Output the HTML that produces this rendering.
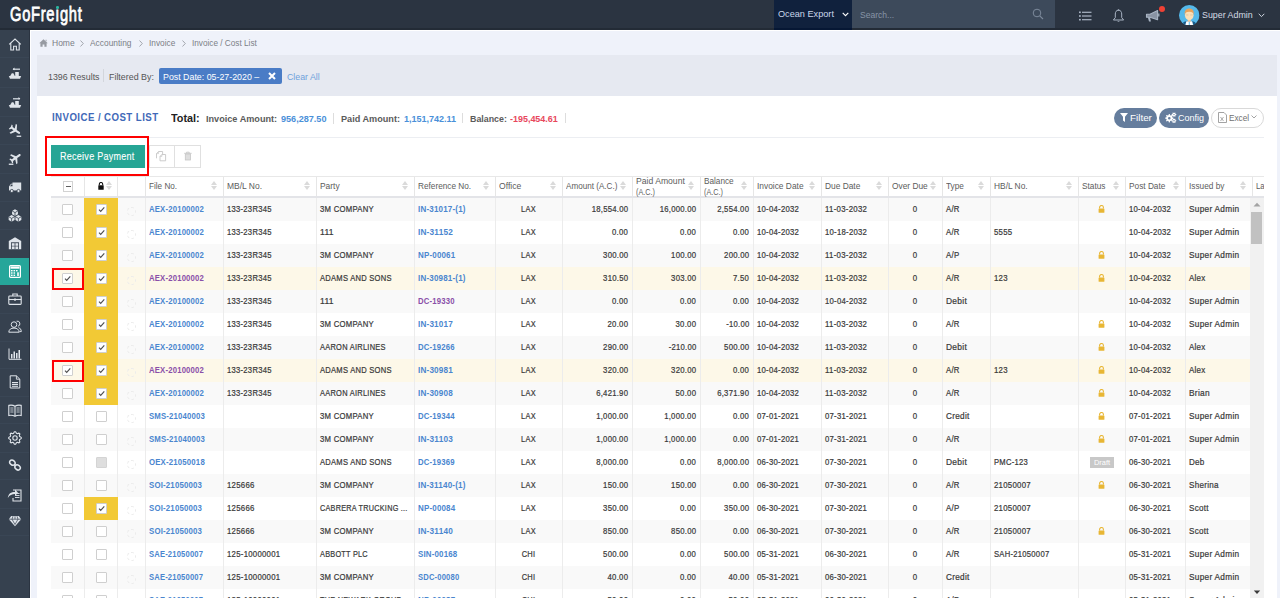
<!DOCTYPE html><html><head><meta charset="utf-8"><title>Invoice / Cost List</title><style>
*{box-sizing:border-box;margin:0;padding:0}
html,body{width:1280px;height:598px;overflow:hidden;background:#eff2fa;font-family:"Liberation Sans",sans-serif;position:relative}
.abs{position:absolute}
.t{position:absolute;white-space:nowrap}
#top{position:absolute;left:0;top:0;width:1280px;height:30px;background:#2b3441;border-bottom:2px solid #232b36}
#logo{position:absolute;left:9.5px;top:0.5px;color:#fff;font-size:21px;line-height:26px;font-weight:normal;-webkit-text-stroke:0.8px #fff;letter-spacing:1px;transform:scaleX(0.70);transform-origin:top left;white-space:nowrap}
#side{position:absolute;left:0;top:30px;width:30px;height:568px;background:#36414f;border-right:1px solid #2b3441}
.si{position:absolute;left:0;width:29px;border-bottom:1px solid #3a4655}
#content{position:absolute;left:30px;top:30px;width:1250px;height:568px;background:#eff2fa;border-left:1px solid #fff;border-top:1px solid #fff}
.cb{position:absolute;width:11px;height:11px;border:1px solid #cfcfcf;background:#fff;border-radius:1px}
.cb.dis{background:#dedede;border-color:#d4d4d4}
.srt{position:absolute;width:6px;height:10px}
.srt:before{content:"";position:absolute;left:0;top:0;border-left:3px solid transparent;border-right:3px solid transparent;border-bottom:4.3px solid #dadada}
.srt:after{content:"";position:absolute;left:0;top:5.2px;border-left:3px solid transparent;border-right:3px solid transparent;border-top:4.3px solid #dadada}
.pill{position:absolute;top:108px;height:20px;border-radius:10px;background:#657d9d}
</style></head><body>
<div id="top"></div>
<div id="logo">GoFre&#305;ght</div>
<div class="abs" style="left:56px;top:6px;width:2.6px;height:2.6px;border-radius:1.3px;background:#2bb5a0"></div>
<div class="abs" style="left:774px;top:0;width:78px;height:28px;background:#10213d"></div><div class="abs" style="left:774px;top:28px;width:78px;height:2px;background:#061734"></div>
<div class="t" style="left:778px;top:8px;font-size:9.6px;line-height:12px;color:#c9d6ea;transform:scaleX(0.9536);transform-origin:left center;">Ocean Export</div>
<svg class="abs" style="left:842px;top:12px" width="7" height="5" viewBox="0 0 7 5"><path d="M0.7 0.8L3.5 3.6L6.3 0.8" fill="none" stroke="#fff" stroke-width="1.1"/></svg>
<div class="abs" style="left:852px;top:0;width:203px;height:28px;background:#3d4a5b"></div>
<div class="t" style="left:860px;top:9px;font-size:9.4px;line-height:12px;color:#8794a6;transform:scaleX(0.9117);transform-origin:left center;">Search...</div>
<svg class="abs" style="left:1032px;top:8px" width="12" height="12" viewBox="0 0 12 12"><circle cx="5" cy="5" r="3.8" fill="none" stroke="#7d8a9c" stroke-width="1"/><path d="M7.8 7.8L11 11" stroke="#7d8a9c" stroke-width="1.1"/></svg>
<svg class="abs" style="left:1079px;top:11px" width="13" height="10" viewBox="0 0 13 10"><g fill="#a9b4c4"><rect x="0" y="0.5" width="1.8" height="1.6"/><rect x="0" y="4.2" width="1.8" height="1.6"/><rect x="0" y="7.9" width="1.8" height="1.6"/><rect x="3" y="0.7" width="9.5" height="1.2"/><rect x="3" y="4.4" width="9.5" height="1.2"/><rect x="3" y="8.1" width="9.5" height="1.2"/></g></svg>
<svg class="abs" style="left:1112px;top:9px" width="13" height="14" viewBox="0 0 13 14"><path d="M6.5 1.2C4.3 1.2 3.3 3 3.3 5V8.6L1.4 11H11.6L9.7 8.6V5C9.7 3 8.7 1.2 6.5 1.2Z" fill="none" stroke="#a9b4c4" stroke-width="1"/><path d="M5.3 12.2A1.3 1.3 0 0 0 7.7 12.2" fill="#a9b4c4"/><circle cx="6.5" cy="1" r="0.8" fill="#a9b4c4"/></svg>
<svg class="abs" style="left:1145px;top:9px" width="16" height="14" viewBox="0 0 16 14"><path d="M1.5 5.2H5L12.6 1.6V10.8L5 8.2H1.5Z" fill="#8993a3" stroke="#a9b4c4" stroke-width="1.1" stroke-linejoin="round"/><path d="M2.8 8.2L4 12.6H5.9L5 8.2Z" fill="#a9b4c4"/><path d="M13.8 4.6V7.4" stroke="#a9b4c4" stroke-width="1.3"/></svg>
<div class="abs" style="left:1159px;top:6px;width:6px;height:6px;border-radius:3px;background:#f04134"></div>
<svg class="abs" style="left:1179px;top:4.5px" width="20.5" height="20.5" viewBox="0 0 21 21"><defs><clipPath id="av"><circle cx="10.5" cy="10.5" r="10.5"/></clipPath></defs><g clip-path="url(#av)"><rect width="21" height="21" fill="#55b9ea"/><path d="M2.5 21C3.5 17.3 6 16.3 10.5 16.3S17.5 17.3 18.5 21Z" fill="#175a8a"/><path d="M6.3 21L7.6 16.6H13.4L14.7 21Z" fill="#fff"/><rect x="10" y="16.8" width="1" height="4.2" fill="#55b9ea"/><rect x="9" y="14" width="3" height="3" fill="#f2c99a"/><ellipse cx="10.5" cy="10.6" rx="4.4" ry="5.1" fill="#fbdfb6"/><path d="M5.8 10.2C5.4 5.6 7.4 3.6 10.5 3.6S15.6 5.6 15.2 10.2C14.9 7.9 13.4 6.8 10.5 6.8S6.1 7.9 5.8 10.2Z" fill="#e9a35c"/><path d="M7 10.2H9.6M11.4 10.2H14" stroke="#d8b28a" stroke-width="0.6"/></g></svg>
<div class="t" style="left:1202px;top:8.5px;font-size:9.6px;line-height:12px;color:#d5dbe4;transform:scaleX(0.9219);transform-origin:left center;">Super Admin</div>
<svg class="abs" style="left:1258px;top:13px" width="7" height="5" viewBox="0 0 7 5"><path d="M0.7 0.8L3.5 3.6L6.3 0.8" fill="none" stroke="#cfd6e0" stroke-width="1"/></svg>
<div id="side"></div>
<div class="si" style="top:30px;height:28px"></div>
<div class="si" style="top:57px;height:31px"></div>
<div class="si" style="top:87px;height:30px"></div>
<div class="si" style="top:116px;height:29px"></div>
<div class="si" style="top:144px;height:30px"></div>
<div class="si" style="top:173px;height:29px"></div>
<div class="si" style="top:201px;height:29px"></div>
<div class="si" style="top:229px;height:30px"></div>
<div class="si" style="top:258px;height:27px;background:#26a69a;border-bottom:0"></div>
<div class="si" style="top:285px;height:29px"></div>
<div class="si" style="top:313px;height:29px"></div>
<div class="si" style="top:341px;height:28px"></div>
<div class="si" style="top:368px;height:29px"></div>
<div class="si" style="top:396px;height:28px"></div>
<div class="si" style="top:423px;height:30px"></div>
<div class="si" style="top:452px;height:28px"></div>
<div class="si" style="top:479px;height:30px"></div>
<div class="si" style="top:508px;height:28px"></div>
<div class="abs" style="left:8px;top:38px;width:14px;height:13px;line-height:0"><svg width="14" height="13" viewBox="0 0 14 13"><path d="M1.2 6.3L7 1L12.8 6.3M2.8 5V12H5.6V8.2H8.4V12H11.2V5" fill="none" stroke="#dfe4ea" stroke-width="1.1"/></svg></div>
<div class="abs" style="left:8px;top:66px;width:14px;height:14px;line-height:0"><svg width="14" height="14" viewBox="0 0 14 14"><path d="M0.8 10H13.2L12 12.8H2Z" fill="#dfe4ea"/><path d="M2.2 10L3.8 7.2H5.4L6.8 10Z" fill="#dfe4ea"/><rect x="7.2" y="6" width="3.6" height="4" fill="#dfe4ea"/><path d="M5 3.2H12" stroke="#dfe4ea" stroke-width="1.2"/><path d="M6.5 1.5L4.6 3.2L6.5 4.3" fill="#dfe4ea"/></svg></div>
<div class="abs" style="left:8px;top:95px;width:14px;height:14px;line-height:0"><svg width="14" height="14" viewBox="0 0 14 14"><path d="M0.8 10H13.2L12 12.8H2Z" fill="#dfe4ea"/><path d="M2.2 10L3.8 7.2H5.4L6.8 10Z" fill="#dfe4ea"/><rect x="7.2" y="6" width="3.6" height="4" fill="#dfe4ea"/><path d="M5 3.8H12" stroke="#dfe4ea" stroke-width="1.2"/><path d="M10.5 2L12.4 3.8L10.5 4.6" fill="#dfe4ea"/></svg></div>
<div class="abs" style="left:8px;top:124px;width:14px;height:14px;line-height:0"><svg width="14" height="14" viewBox="0 0 14 14"><path transform="translate(7 6) rotate(35) scale(0.98) translate(-7 -7)" d="M13.2 7C13.2 7.8 12.4 8.1 11.6 8.1H8.4L5.6 12.6H4.1L5.9 8.1H3.3L2.2 9.6H1.1L1.7 7L1.1 4.4H2.2L3.3 5.9H5.9L4.1 1.4H5.6L8.4 5.9H11.6C12.4 5.9 13.2 6.2 13.2 7Z" fill="#dfe4ea"/><rect x="8.6" y="11.6" width="4.6" height="1.3" fill="#dfe4ea"/></svg></div>
<div class="abs" style="left:8px;top:152px;width:14px;height:14px;line-height:0"><svg width="14" height="14" viewBox="0 0 14 14"><path transform="translate(7.5 6) rotate(-35) scale(0.98) translate(-7 -7)" d="M13.2 7C13.2 7.8 12.4 8.1 11.6 8.1H8.4L5.6 12.6H4.1L5.9 8.1H3.3L2.2 9.6H1.1L1.7 7L1.1 4.4H2.2L3.3 5.9H5.9L4.1 1.4H5.6L8.4 5.9H11.6C12.4 5.9 13.2 6.2 13.2 7Z" fill="#dfe4ea"/><rect x="0.8" y="11.6" width="4.6" height="1.3" fill="#dfe4ea"/></svg></div>
<div class="abs" style="left:8px;top:181px;width:14px;height:13px;line-height:0"><svg width="14" height="13" viewBox="0 0 14 13"><path d="M4.5 1.5H13.2V9.5H1V5.5L3 2.8H4.5Z" fill="#dfe4ea"/><path d="M2 5.3L3.4 3.5H4.5V5.3Z" fill="#36414f"/><circle cx="3.8" cy="10" r="1.6" fill="#dfe4ea" stroke="#36414f" stroke-width="0.8"/><circle cx="10.5" cy="10" r="1.6" fill="#dfe4ea" stroke="#36414f" stroke-width="0.8"/></svg></div>
<div class="abs" style="left:8px;top:209px;width:14px;height:13px;line-height:0"><svg width="14" height="13" viewBox="0 0 14 13" overflow="visible"><path d="M7.00 0.20L4.06 1.90L4.06 5.30L7.00 7.00L9.94 5.30L9.94 1.90Z" fill="#dfe4ea"/><path d="M4.06 1.90L7.00 3.60L9.94 1.90M7.00 3.60L7.00 7.00" fill="none" stroke="#36414f" stroke-width="0.8"/><path d="M3.60 6.00L0.66 7.70L0.66 11.10L3.60 12.80L6.54 11.10L6.54 7.70Z" fill="#dfe4ea"/><path d="M0.66 7.70L3.60 9.40L6.54 7.70M3.60 9.40L3.60 12.80" fill="none" stroke="#36414f" stroke-width="0.8"/><path d="M10.40 6.00L7.46 7.70L7.46 11.10L10.40 12.80L13.34 11.10L13.34 7.70Z" fill="#dfe4ea"/><path d="M7.46 7.70L10.40 9.40L13.34 7.70M10.40 9.40L10.40 12.80" fill="none" stroke="#36414f" stroke-width="0.8"/></svg></div>
<div class="abs" style="left:8px;top:236px;width:14px;height:14px;line-height:0"><svg width="14" height="14" viewBox="0 0 14 14"><path d="M0.8 5L7 1.2L13.2 5V13.2H0.8Z" fill="#dfe4ea"/><rect x="3" y="6.3" width="8" height="6.9" fill="#36414f"/><g fill="#dfe4ea"><rect x="3.8" y="7.2" width="2.8" height="2.6"/><rect x="7.4" y="7.2" width="2.8" height="2.6"/><rect x="3.8" y="10.4" width="2.8" height="2.6"/><rect x="7.4" y="10.4" width="2.8" height="2.6"/></g></svg></div>
<div class="abs" style="left:9px;top:265px;width:12px;height:13px;line-height:0"><svg width="12" height="13" viewBox="0 0 12 13"><rect x="0.6" y="0.6" width="10.8" height="11.8" rx="1" fill="none" stroke="#fff" stroke-width="1.2"/><rect x="1.5" y="1.5" width="9" height="2.2" fill="#fff"/><g fill="#fff"><rect x="2" y="5" width="1.6" height="1.4"/><rect x="4.5" y="5" width="1.6" height="1.4"/><rect x="7" y="5" width="1.6" height="1.4"/><rect x="2" y="7.3" width="1.6" height="1.4"/><rect x="4.5" y="7.3" width="1.6" height="1.4"/><rect x="2" y="9.6" width="1.6" height="1.4"/><rect x="4.5" y="9.6" width="1.6" height="1.4"/><rect x="8.2" y="7.3" width="1.6" height="3.7"/></g></svg></div>
<div class="abs" style="left:8px;top:293px;width:14px;height:12px;line-height:0"><svg width="14" height="12" viewBox="0 0 14 12"><rect x="0.8" y="3" width="12.4" height="8.4" rx="0.8" fill="none" stroke="#dfe4ea" stroke-width="1.1"/><path d="M4.8 3V1H9.2V3" fill="none" stroke="#dfe4ea" stroke-width="1.1"/><path d="M0.8 6.5H13.2" stroke="#dfe4ea" stroke-width="1.1"/><rect x="6" y="5.6" width="2" height="2" fill="#dfe4ea"/></svg></div>
<div class="abs" style="left:8px;top:320px;width:14px;height:14px;line-height:0"><svg width="14" height="13" viewBox="0 0 14 13"><path d="M8.6 1.2A2.6 2.6 0 1 1 9.9 6.3M10.6 7.6C12.2 8.2 13.2 9.4 13.3 11.6H11.6" fill="none" stroke="#dfe4ea" stroke-width="1"/><circle cx="6" cy="4.6" r="2.8" fill="#36414f" stroke="#dfe4ea" stroke-width="1"/><path d="M0.8 12.2C1 9.3 3 8.1 6 8.1S11 9.3 11.2 12.2Z" fill="#36414f" stroke="#dfe4ea" stroke-width="1"/></svg></div>
<div class="abs" style="left:8px;top:348px;width:14px;height:12px;line-height:0"><svg width="14" height="12" viewBox="0 0 14 12"><path d="M1 0.5V11.3H13.5" fill="none" stroke="#dfe4ea" stroke-width="1"/><g fill="#dfe4ea"><rect x="3" y="6" width="1.5" height="4.5"/><rect x="5.5" y="3.5" width="1.5" height="7"/><rect x="8" y="5" width="1.5" height="5.5"/><rect x="10.5" y="2" width="1.5" height="8.5"/></g></svg></div>
<div class="abs" style="left:9px;top:375px;width:12px;height:14px;line-height:0"><svg width="12" height="14" viewBox="0 0 12 14"><path d="M1.2 0.8H7.4L10.8 4.2V13H1.2Z" fill="none" stroke="#dfe4ea" stroke-width="1"/><path d="M7.4 0.8V4.2H10.8" fill="none" stroke="#dfe4ea" stroke-width="0.9"/><g fill="#dfe4ea"><rect x="3" y="7" width="6" height="1.2"/><rect x="3" y="9" width="6" height="1.2"/><rect x="3" y="11" width="6" height="0.8"/></g></svg></div>
<div class="abs" style="left:8px;top:404px;width:14px;height:13px;line-height:0"><svg width="14" height="13" viewBox="0 0 14 13"><path d="M7 2.2C5 1 3 0.9 0.8 1.4V11.5C3 11 5 11.2 7 12.3C9 11.2 11 11 13.2 11.5V1.4C11 0.9 9 1 7 2.2ZM7 2.2V12.3" fill="none" stroke="#dfe4ea" stroke-width="1.1"/><g stroke="#dfe4ea" stroke-width="0.8"><path d="M2.3 4H5.5M2.3 6H5.5M2.3 8H5.5M8.5 4H11.7M8.5 6H11.7M8.5 8H11.7"/></g></svg></div>
<div class="abs" style="left:8px;top:431px;width:14px;height:14px;line-height:0"><svg width="14" height="14" viewBox="0 0 14 14"><path d="M13.27 6.38L13.27 7.62L11.69 8.42L11.32 9.31L11.87 11.00L11.00 11.87L9.31 11.32L8.42 11.69L7.62 13.27L6.38 13.27L5.58 11.69L4.69 11.32L3.00 11.87L2.13 11.00L2.68 9.31L2.31 8.42L0.73 7.62L0.73 6.38L2.31 5.58L2.68 4.69L2.13 3.00L3.00 2.13L4.69 2.68L5.58 2.31L6.38 0.73L7.62 0.73L8.42 2.31L9.31 2.68L11.00 2.13L11.87 3.00L11.32 4.69L11.69 5.58Z" fill="none" stroke="#dfe4ea" stroke-width="1.1" stroke-linejoin="round"/><circle cx="7" cy="7" r="2.2" fill="none" stroke="#dfe4ea" stroke-width="1.1"/></svg></div>
<div class="abs" style="left:8px;top:458px;width:14px;height:14px;line-height:0"><svg width="14" height="14" viewBox="0 0 14 14"><g fill="none" stroke="#dfe4ea" stroke-width="1.5"><ellipse cx="4.4" cy="4.6" rx="2.9" ry="2.3" transform="rotate(40 4.4 4.6)"/><ellipse cx="9.6" cy="9.4" rx="2.9" ry="2.3" transform="rotate(40 9.6 9.4)"/><path d="M6 6.3L8 7.8"/></g></svg></div>
<div class="abs" style="left:7px;top:487px;width:16px;height:15px;line-height:0"><svg width="16" height="15" viewBox="0 0 16 15"><path d="M6 3H14V14H6V11" fill="none" stroke="#dfe4ea" stroke-width="1.1"/><g fill="#dfe4ea"><rect x="8" y="6" width="4.5" height="0.9"/><rect x="8" y="8" width="4.5" height="0.9"/><rect x="8" y="10" width="4.5" height="0.9"/></g><path d="M0.8 11C1.5 6.5 4 5 8 5V2.5L11 5.8L8 9V7C5 7 2.5 8 0.8 11Z" fill="#dfe4ea"/></svg></div>
<div class="abs" style="left:8px;top:515px;width:14px;height:12px;line-height:0"><svg width="14" height="12" viewBox="0 0 14 12"><path d="M3.2 1H10.8L13.2 4.2L7 11.2L0.8 4.2Z" fill="#dfe4ea"/><path d="M4 4.2L7 9.5L10 4.2M0.8 4.2H13.2M5 1.2L4 4.2M9 1.2L10 4.2M7 1.2V4.2" fill="none" stroke="#36414f" stroke-width="0.7"/></svg></div>
<div id="content"></div>
<svg class="abs" style="left:39px;top:39px" width="9" height="8" viewBox="0 0 9 8"><path d="M4.5 0.3L0.2 4.2H1.4V7.8H3.6V5.4H5.4V7.8H7.6V4.2H8.8ZM6.6 0.8H7.5V2.6L6.6 1.8Z" fill="#979ba2"/></svg>
<div class="t" style="left:52px;top:38px;font-size:8.8px;line-height:11px;color:#7b7f86;transform:scaleX(0.9655);transform-origin:left center;">Home</div>
<div class="t" style="left:90px;top:38px;font-size:8.8px;line-height:11px;color:#7b7f86;transform:scaleX(0.9525);transform-origin:left center;">Accounting</div>
<div class="t" style="left:148.5px;top:38px;font-size:8.8px;line-height:11px;color:#7b7f86;transform:scaleX(0.9433);transform-origin:left center;">Invoice</div>
<div class="t" style="left:191.5px;top:38px;font-size:8.8px;line-height:11px;color:#7b7f86;transform:scaleX(0.9332);transform-origin:left center;">Invoice / Cost List</div>
<svg class="abs" style="left:80px;top:39.5px" width="4" height="7" viewBox="0 0 4 7"><path d="M0.5 0.5L3.3 3.5L0.5 6.5" fill="none" stroke="#9a9ea5" stroke-width="0.9"/></svg>
<svg class="abs" style="left:138.5px;top:39.5px" width="4" height="7" viewBox="0 0 4 7"><path d="M0.5 0.5L3.3 3.5L0.5 6.5" fill="none" stroke="#9a9ea5" stroke-width="0.9"/></svg>
<svg class="abs" style="left:181.5px;top:39.5px" width="4" height="7" viewBox="0 0 4 7"><path d="M0.5 0.5L3.3 3.5L0.5 6.5" fill="none" stroke="#9a9ea5" stroke-width="0.9"/></svg>
<div class="abs" style="left:37px;top:55px;width:1240px;height:41px;background:#e6e9f1"></div>
<div class="t" style="left:47.5px;top:71px;font-size:9.3px;line-height:12px;color:#555;transform:scaleX(0.9488);transform-origin:left center;">1396 Results</div>
<div class="abs" style="left:103px;top:69px;width:1px;height:13px;background:#d3d6dc"></div>
<div class="t" style="left:109px;top:71px;font-size:9.3px;line-height:12px;color:#555;transform:scaleX(0.9541);transform-origin:left center;">Filtered By:</div>
<div class="abs" style="left:159px;top:67.5px;width:123px;height:16.5px;background:#4a7cc6;border-radius:2px"></div>
<div class="t" style="left:163px;top:71px;font-size:9.3px;line-height:12px;color:#fff;transform:scaleX(0.9497);transform-origin:left center;">Post Date: 05-27-2020 &ndash;</div>
<svg class="abs" style="left:268px;top:72px" width="8" height="8" viewBox="0 0 8 8"><path d="M1 1L7 7M7 1L1 7" stroke="#fff" stroke-width="2"/></svg>
<div class="t" style="left:287px;top:71px;font-size:9.3px;line-height:12px;color:#6ea1dc;transform:scaleX(0.9456);transform-origin:left center;">Clear All</div>
<div class="abs" style="left:37px;top:96px;width:1240px;height:502px;background:#fff"></div>
<div class="t" style="left:51.5px;top:109.5px;font-size:11.4px;line-height:14px;color:#3f69b8;font-weight:bold;transform:scaleX(0.8496);transform-origin:left center;letter-spacing:0.5px;">INVOICE / COST LIST</div>
<div class="t" style="left:171px;top:111px;font-size:10.8px;line-height:14px;color:#222;font-weight:bold;transform:scaleX(1.0027);transform-origin:left center;">Total:</div>
<div class="t" style="left:206px;top:112.5px;font-size:9.3px;line-height:12px;color:#5a5a5a;font-weight:bold;transform:scaleX(0.9812);transform-origin:left center;">Invoice Amount:</div>
<div class="t" style="left:281px;top:112.5px;font-size:9.3px;line-height:12px;color:#4a90d9;font-weight:bold;transform:scaleX(0.9767);transform-origin:left center;">956,287.50</div>
<div class="abs" style="left:333px;top:113px;width:1px;height:11px;background:#ddd"></div>
<div class="t" style="left:340.5px;top:112.5px;font-size:9.3px;line-height:12px;color:#5a5a5a;font-weight:bold;transform:scaleX(0.9822);transform-origin:left center;">Paid Amount:</div>
<div class="t" style="left:403.5px;top:112.5px;font-size:9.3px;line-height:12px;color:#4a90d9;font-weight:bold;transform:scaleX(0.9673);transform-origin:left center;">1,151,742.11</div>
<div class="abs" style="left:462px;top:113px;width:1px;height:10px;background:#ddd"></div>
<div class="t" style="left:470px;top:112.5px;font-size:9.3px;line-height:12px;color:#5a5a5a;font-weight:bold;transform:scaleX(0.9525);transform-origin:left center;">Balance:</div>
<div class="t" style="left:510px;top:112.5px;font-size:9.3px;line-height:12px;color:#e8475c;font-weight:bold;transform:scaleX(0.9626);transform-origin:left center;">-195,454.61</div>
<div class="abs" style="left:565px;top:113px;width:1px;height:10px;background:#ddd"></div>
<div class="pill" style="left:1114px;width:43px"></div>
<svg class="abs" style="left:1120px;top:113px" width="8" height="9" viewBox="0 0 8 9"><path d="M0 0H8L5 3.8V9L3 7.5V3.8Z" fill="#fff"/></svg>
<div class="t" style="left:1130px;top:112px;font-size:9.6px;line-height:12px;color:#fff;transform:scaleX(1.0272);transform-origin:left center;">Filter</div>
<div class="pill" style="left:1159px;width:50px"></div>
<svg class="abs" style="left:1165px;top:111.5px" width="12" height="12" viewBox="0 0 12 12"><path fill-rule="evenodd" d="M8.48 5.79L8.48 6.61L7.17 7.07L6.95 7.61L7.55 8.86L6.96 9.45L5.71 8.85L5.17 9.07L4.71 10.38L3.89 10.38L3.43 9.07L2.89 8.85L1.64 9.45L1.05 8.86L1.65 7.61L1.43 7.07L0.12 6.61L0.12 5.79L1.43 5.33L1.65 4.79L1.05 3.54L1.64 2.95L2.89 3.55L3.43 3.33L3.89 2.02L4.71 2.02L5.17 3.33L5.71 3.55L6.96 2.95L7.55 3.54L6.95 4.79L7.17 5.33ZM3.00 6.20A1.30 1.30 0 1 0 5.60 6.20A1.30 1.30 0 1 0 3.00 6.20ZM11.38 2.29L11.38 2.91L10.57 3.25L10.35 3.63L10.46 4.50L9.92 4.82L9.22 4.29L8.78 4.29L8.08 4.82L7.54 4.50L7.65 3.63L7.43 3.25L6.62 2.91L6.62 2.29L7.43 1.95L7.65 1.57L7.54 0.70L8.08 0.38L8.78 0.91L9.22 0.91L9.92 0.38L10.46 0.70L10.35 1.57L10.57 1.95ZM8.30 2.60A0.70 0.70 0 1 0 9.70 2.60A0.70 0.70 0 1 0 8.30 2.60ZM11.38 8.49L11.38 9.11L10.57 9.45L10.35 9.83L10.46 10.70L9.92 11.02L9.22 10.49L8.78 10.49L8.08 11.02L7.54 10.70L7.65 9.83L7.43 9.45L6.62 9.11L6.62 8.49L7.43 8.15L7.65 7.77L7.54 6.90L8.08 6.58L8.78 7.11L9.22 7.11L9.92 6.58L10.46 6.90L10.35 7.77L10.57 8.15ZM8.30 8.80A0.70 0.70 0 1 0 9.70 8.80A0.70 0.70 0 1 0 8.30 8.80Z" fill="#fff"/></svg>
<div class="t" style="left:1178px;top:112px;font-size:9.6px;line-height:12px;color:#fff;transform:scaleX(0.9372);transform-origin:left center;">Config</div>
<div class="abs" style="left:1211px;top:108px;width:53px;height:20px;border:1px solid #d9d9d9;border-radius:10px;background:#fff"></div>
<svg class="abs" style="left:1218px;top:111.5px" width="9" height="11" viewBox="0 0 9 11"><path d="M0.5 0.5H6L8.5 3V10.5H0.5Z" fill="none" stroke="#999" stroke-width="0.9"/><path d="M2.5 5L5.5 9M5.5 5L2.5 9" stroke="#999" stroke-width="0.8"/></svg>
<div class="t" style="left:1229px;top:112px;font-size:9.4px;line-height:12px;color:#707070;transform:scaleX(0.8793);transform-origin:left center;">Excel</div>
<svg class="abs" style="left:1251px;top:115px" width="6" height="4" viewBox="0 0 6 4"><path d="M0.5 0.5L3 3L5.5 0.5" fill="none" stroke="#999" stroke-width="0.9"/></svg>
<div class="abs" style="left:51px;top:137px;width:1213px;height:1px;background:#eceef2"></div>
<div class="abs" style="left:51px;top:145px;width:94px;height:23px;background:#26a595"></div>
<div class="t" style="left:60px;top:149px;font-size:10.6px;line-height:14px;color:#fff;-webkit-text-stroke:0.1px #fff;transform:scaleX(0.8522);transform-origin:left center;letter-spacing:0.3px;">Receive Payment</div>
<div class="abs" style="left:149px;top:145px;width:52px;height:23px;border:1px solid #e0e0e0;background:#fff"></div>
<div class="abs" style="left:174px;top:145px;width:1px;height:23px;background:#e0e0e0"></div>
<svg class="abs" style="left:155px;top:150px" width="12" height="12" viewBox="0 0 12 12"><path d="M1.5 8.3V3.6L3.6 1.5H7.6V4.2" fill="none" stroke="#c6c6c6" stroke-width="0.9"/><path d="M1.5 3.6H3.6V1.5" fill="none" stroke="#c6c6c6" stroke-width="0.7"/><path d="M5 6.4L6.9 4.5H10.6V10.8H5Z" fill="#fff" stroke="#c6c6c6" stroke-width="0.9"/><path d="M5 6.4H6.9V4.5" fill="none" stroke="#c6c6c6" stroke-width="0.7"/></svg>
<svg class="abs" style="left:183px;top:151px" width="10" height="10" viewBox="0 0 10 10"><path d="M1.2 2.3H8.6M3.6 2.3V1.2H6.2V2.3" fill="none" stroke="#c6c6c6" stroke-width="0.9"/><rect x="2.3" y="3" width="5.2" height="6" fill="#dedede" stroke="#c6c6c6" stroke-width="0.8"/></svg>
<div class="abs" style="left:45px;top:136px;width:104px;height:40px;border:2px solid #fe0000"></div>
<div class="abs" style="left:51px;top:176px;width:1213px;height:1px;background:#e8e8e8"></div>
<div class="abs" style="left:51px;top:196px;width:1213px;height:2px;background:#e3e4e8"></div>
<div class="abs" style="left:84px;top:177px;width:1px;height:19px;background:#e6e6e6"></div>
<div class="abs" style="left:117px;top:177px;width:1px;height:19px;background:#e6e6e6"></div>
<div class="abs" style="left:145px;top:177px;width:1px;height:19px;background:#e6e6e6"></div>
<div class="abs" style="left:223px;top:177px;width:1px;height:19px;background:#e6e6e6"></div>
<div class="abs" style="left:316px;top:177px;width:1px;height:19px;background:#e6e6e6"></div>
<div class="abs" style="left:414px;top:177px;width:1px;height:19px;background:#e6e6e6"></div>
<div class="abs" style="left:495px;top:177px;width:1px;height:19px;background:#e6e6e6"></div>
<div class="abs" style="left:562px;top:177px;width:1px;height:19px;background:#e6e6e6"></div>
<div class="abs" style="left:632px;top:177px;width:1px;height:19px;background:#e6e6e6"></div>
<div class="abs" style="left:700px;top:177px;width:1px;height:19px;background:#e6e6e6"></div>
<div class="abs" style="left:753px;top:177px;width:1px;height:19px;background:#e6e6e6"></div>
<div class="abs" style="left:821px;top:177px;width:1px;height:19px;background:#e6e6e6"></div>
<div class="abs" style="left:888px;top:177px;width:1px;height:19px;background:#e6e6e6"></div>
<div class="abs" style="left:942px;top:177px;width:1px;height:19px;background:#e6e6e6"></div>
<div class="abs" style="left:990px;top:177px;width:1px;height:19px;background:#e6e6e6"></div>
<div class="abs" style="left:1078px;top:177px;width:1px;height:19px;background:#e6e6e6"></div>
<div class="abs" style="left:1125px;top:177px;width:1px;height:19px;background:#e6e6e6"></div>
<div class="abs" style="left:1185px;top:177px;width:1px;height:19px;background:#e6e6e6"></div>
<div class="abs" style="left:1252px;top:177px;width:1px;height:19px;background:#e6e6e6"></div>
<span class="cb" style="left:63px;top:181px;width:10px;height:11px;border-color:#d2d2d2;border-radius:0"><i class="abs" style="left:1.5px;top:4px;width:5px;height:1.3px;background:#5f5f5f"></i></span>
<svg class="abs" style="left:98px;top:182px" width="6" height="8" viewBox="0 0 6 8"><path d="M1.3 3.3V2.2A1.7 1.7 0 0 1 4.7 2.2V3.3" fill="none" stroke="#111" stroke-width="1.1"/><rect x="0.3" y="3.3" width="5.4" height="4.5" rx="0.4" fill="#111"/></svg>
<i class="srt" style="left:105.5px;top:181px"></i>
<div class="t" style="left:148.5px;top:181px;font-size:8.8px;line-height:10px;color:#5c5c5c;transform:scaleX(0.9262);transform-origin:left center;">File No.</div>
<i class="srt" style="left:211px;top:181px"></i>
<div class="t" style="left:226.5px;top:181px;font-size:8.8px;line-height:10px;color:#5c5c5c;transform:scaleX(0.9628);transform-origin:left center;">MB/L No.</div>
<i class="srt" style="left:304px;top:181px"></i>
<div class="t" style="left:319.5px;top:181px;font-size:8.8px;line-height:10px;color:#5c5c5c;transform:scaleX(0.9557);transform-origin:left center;">Party</div>
<i class="srt" style="left:402px;top:181px"></i>
<div class="t" style="left:417.5px;top:181px;font-size:8.8px;line-height:10px;color:#5c5c5c;transform:scaleX(0.9369);transform-origin:left center;">Reference No.</div>
<i class="srt" style="left:483px;top:181px"></i>
<div class="t" style="left:498.5px;top:181px;font-size:8.8px;line-height:10px;color:#5c5c5c;transform:scaleX(0.9752);transform-origin:left center;">Office</div>
<i class="srt" style="left:550px;top:181px"></i>
<div class="t" style="left:565.5px;top:181px;font-size:8.8px;line-height:10px;color:#5c5c5c;transform:scaleX(0.9219);transform-origin:left center;">Amount (A.C.)</div>
<i class="srt" style="left:620px;top:181px"></i>
<div class="t" style="left:635.5px;top:175.5px;font-size:8.8px;line-height:10px;color:#5c5c5c;transform:scaleX(0.9790);transform-origin:left center;">Paid Amount</div>
<div class="t" style="left:635.5px;top:186.5px;font-size:8.8px;line-height:10px;color:#5c5c5c;transform:scaleX(0.8242);transform-origin:left center;">(A.C.)</div>
<i class="srt" style="left:688px;top:181px"></i>
<div class="t" style="left:703.5px;top:175.5px;font-size:8.8px;line-height:10px;color:#5c5c5c;transform:scaleX(0.9332);transform-origin:left center;">Balance</div>
<div class="t" style="left:703.5px;top:186.5px;font-size:8.8px;line-height:10px;color:#5c5c5c;transform:scaleX(0.8242);transform-origin:left center;">(A.C.)</div>
<i class="srt" style="left:741px;top:181px"></i>
<div class="t" style="left:756.5px;top:181px;font-size:8.8px;line-height:10px;color:#5c5c5c;transform:scaleX(0.9516);transform-origin:left center;">Invoice Date</div>
<i class="srt" style="left:809px;top:181px"></i>
<div class="t" style="left:824.5px;top:181px;font-size:8.8px;line-height:10px;color:#5c5c5c;transform:scaleX(0.9505);transform-origin:left center;">Due Date</div>
<i class="srt" style="left:876px;top:181px"></i>
<div class="t" style="left:891.5px;top:181px;font-size:8.8px;line-height:10px;color:#5c5c5c;transform:scaleX(0.9491);transform-origin:left center;">Over Due</div>
<i class="srt" style="left:930px;top:181px"></i>
<div class="t" style="left:945.5px;top:181px;font-size:8.8px;line-height:10px;color:#5c5c5c;transform:scaleX(0.9387);transform-origin:left center;">Type</div>
<i class="srt" style="left:978px;top:181px"></i>
<div class="t" style="left:993.5px;top:181px;font-size:8.8px;line-height:10px;color:#5c5c5c;transform:scaleX(0.9515);transform-origin:left center;">HB/L No.</div>
<i class="srt" style="left:1066px;top:181px"></i>
<div class="t" style="left:1081.5px;top:181px;font-size:8.8px;line-height:10px;color:#5c5c5c;transform:scaleX(0.9422);transform-origin:left center;">Status</div>
<i class="srt" style="left:1113px;top:181px"></i>
<div class="t" style="left:1128.5px;top:181px;font-size:8.8px;line-height:10px;color:#5c5c5c;transform:scaleX(0.9422);transform-origin:left center;">Post Date</div>
<i class="srt" style="left:1173px;top:181px"></i>
<div class="t" style="left:1188.5px;top:181px;font-size:8.8px;line-height:10px;color:#5c5c5c;transform:scaleX(0.9412);transform-origin:left center;">Issued by</div>
<i class="srt" style="left:1240px;top:181px"></i>
<div class="abs" style="left:1253px;top:177px;width:11px;height:19px;overflow:hidden">
<div class="t" style="left:2.5px;top:4px;font-size:8.8px;line-height:10px;color:#5c5c5c;transform:scaleX(0.8897);transform-origin:left center">La</div>
</div>
<div class="abs" style="left:51px;top:198px;width:1213px;height:400px;overflow:hidden">
<div class="abs" style="left:0;top:0px;width:1213px;height:23px;background:#f9f9f9"></div>
<div class="abs" style="left:33px;top:0px;width:34px;height:23px;background:#f2c935"></div>
<div class="abs" style="left:94px;top:0px;width:1px;height:23px;background:#ececec"></div>
<div class="abs" style="left:172px;top:0px;width:1px;height:23px;background:#ececec"></div>
<div class="abs" style="left:265px;top:0px;width:1px;height:23px;background:#ececec"></div>
<div class="abs" style="left:363px;top:0px;width:1px;height:23px;background:#ececec"></div>
<div class="abs" style="left:444px;top:0px;width:1px;height:23px;background:#ececec"></div>
<div class="abs" style="left:511px;top:0px;width:1px;height:23px;background:#ececec"></div>
<div class="abs" style="left:581px;top:0px;width:1px;height:23px;background:#ececec"></div>
<div class="abs" style="left:649px;top:0px;width:1px;height:23px;background:#ececec"></div>
<div class="abs" style="left:702px;top:0px;width:1px;height:23px;background:#ececec"></div>
<div class="abs" style="left:770px;top:0px;width:1px;height:23px;background:#ececec"></div>
<div class="abs" style="left:837px;top:0px;width:1px;height:23px;background:#ececec"></div>
<div class="abs" style="left:891px;top:0px;width:1px;height:23px;background:#ececec"></div>
<div class="abs" style="left:939px;top:0px;width:1px;height:23px;background:#ececec"></div>
<div class="abs" style="left:1027px;top:0px;width:1px;height:23px;background:#ececec"></div>
<div class="abs" style="left:1074px;top:0px;width:1px;height:23px;background:#ececec"></div>
<div class="abs" style="left:1134px;top:0px;width:1px;height:23px;background:#ececec"></div>
<div class="abs" style="left:1201px;top:0px;width:1px;height:23px;background:#ececec"></div>
<span class="cb" style="left:11px;top:6px"></span>
<span class="cb" style="left:45px;top:6px"><svg width="11" height="11" viewBox="0 0 11 11" style="position:absolute;left:-1px;top:-1px"><path d="M3 5.7L4.7 7.4L8.3 3.4" fill="none" stroke="#505050" stroke-width="1.15"/></svg></span>
<span class="abs" style="left:76px;top:9px;width:9px;height:9px;border-radius:50%;border:1px dashed #ebebeb"></span>
<div class="t" style="left:97.5px;top:6px;font-size:8.7px;line-height:11px;color:#4a86cf;font-weight:bold;letter-spacing:0.2px;transform:scaleX(0.8905);transform-origin:left center">AEX-20100002</div>
<div class="t" style="left:175.5px;top:6px;font-size:8.7px;line-height:11px;color:#3a3a3a;-webkit-text-stroke:0.22px #3a3a3a;letter-spacing:0.3px;transform:scaleX(0.8797);transform-origin:left center">133-23R345</div>
<div class="t" style="left:268.5px;top:6px;font-size:8.7px;line-height:11px;color:#3a3a3a;-webkit-text-stroke:0.22px #3a3a3a;letter-spacing:0.3px;transform:scaleX(0.8891);transform-origin:left center">3M COMPANY</div>
<div class="t" style="left:366.5px;top:6px;font-size:8.7px;line-height:11px;color:#4a86cf;font-weight:bold;letter-spacing:0.2px;transform:scaleX(0.9224);transform-origin:left center">IN-31017-(1)</div>
<div class="t" style="left:444px;width:67px;text-align:center;top:6px;font-size:8.7px;line-height:11px;color:#3a3a3a;-webkit-text-stroke:0.22px #3a3a3a;letter-spacing:0.3px;transform:scaleX(0.8524);transform-origin:center center">LAX</div>
<div class="t" style="right:635.5px;top:6px;font-size:8.7px;line-height:11px;color:#3a3a3a;-webkit-text-stroke:0.22px #3a3a3a;letter-spacing:0.3px;transform:scaleX(0.8877);transform-origin:right center">18,554.00</div>
<div class="t" style="right:567.5px;top:6px;font-size:8.7px;line-height:11px;color:#3a3a3a;-webkit-text-stroke:0.22px #3a3a3a;letter-spacing:0.3px;transform:scaleX(0.8877);transform-origin:right center">16,000.00</div>
<div class="t" style="right:514.5px;top:6px;font-size:8.7px;line-height:11px;color:#3a3a3a;-webkit-text-stroke:0.22px #3a3a3a;letter-spacing:0.3px;transform:scaleX(0.8860);transform-origin:right center">2,554.00</div>
<div class="t" style="left:705.5px;top:6px;font-size:8.7px;line-height:11px;color:#3a3a3a;-webkit-text-stroke:0.22px #3a3a3a;letter-spacing:0.3px;transform:scaleX(0.8883);transform-origin:left center">10-04-2032</div>
<div class="t" style="left:773.5px;top:6px;font-size:8.7px;line-height:11px;color:#3a3a3a;-webkit-text-stroke:0.22px #3a3a3a;letter-spacing:0.3px;transform:scaleX(0.9006);transform-origin:left center">11-03-2032</div>
<div class="t" style="left:837px;width:54px;text-align:center;top:6px;font-size:8.7px;line-height:11px;color:#3a3a3a;-webkit-text-stroke:0.22px #3a3a3a;letter-spacing:0.3px;transform:scaleX(0.8997);transform-origin:center center">0</div>
<div class="t" style="left:894.5px;top:6px;font-size:8.7px;line-height:11px;color:#3a3a3a;-webkit-text-stroke:0.22px #3a3a3a;letter-spacing:0.3px;transform:scaleX(0.8890);transform-origin:left center">A/R</div>
<div class="abs" style="left:1047px;top:7px;line-height:0"><svg width="7" height="8" viewBox="0 0 7 8"><path d="M1.6 3.4V2.4A1.9 1.9 0 0 1 5.4 2.4V3.4" fill="none" stroke="#e8b634" stroke-width="1.1"/><rect x="0.6" y="3.4" width="5.8" height="4.4" rx="0.5" fill="#e8b634"/></svg></div>
<div class="t" style="left:1077.5px;top:6px;font-size:8.7px;line-height:11px;color:#3a3a3a;-webkit-text-stroke:0.22px #3a3a3a;letter-spacing:0.3px;transform:scaleX(0.8883);transform-origin:left center">10-04-2032</div>
<div class="t" style="left:1137.5px;top:6px;font-size:8.7px;line-height:11px;color:#3a3a3a;-webkit-text-stroke:0.22px #3a3a3a;letter-spacing:0.3px;transform:scaleX(0.9499);transform-origin:left center">Super Admin</div>
<div class="abs" style="left:0;top:23px;width:1213px;height:23px;background:#ffffff"></div>
<div class="abs" style="left:33px;top:23px;width:34px;height:23px;background:#f2c935"></div>
<div class="abs" style="left:94px;top:23px;width:1px;height:23px;background:#ececec"></div>
<div class="abs" style="left:172px;top:23px;width:1px;height:23px;background:#ececec"></div>
<div class="abs" style="left:265px;top:23px;width:1px;height:23px;background:#ececec"></div>
<div class="abs" style="left:363px;top:23px;width:1px;height:23px;background:#ececec"></div>
<div class="abs" style="left:444px;top:23px;width:1px;height:23px;background:#ececec"></div>
<div class="abs" style="left:511px;top:23px;width:1px;height:23px;background:#ececec"></div>
<div class="abs" style="left:581px;top:23px;width:1px;height:23px;background:#ececec"></div>
<div class="abs" style="left:649px;top:23px;width:1px;height:23px;background:#ececec"></div>
<div class="abs" style="left:702px;top:23px;width:1px;height:23px;background:#ececec"></div>
<div class="abs" style="left:770px;top:23px;width:1px;height:23px;background:#ececec"></div>
<div class="abs" style="left:837px;top:23px;width:1px;height:23px;background:#ececec"></div>
<div class="abs" style="left:891px;top:23px;width:1px;height:23px;background:#ececec"></div>
<div class="abs" style="left:939px;top:23px;width:1px;height:23px;background:#ececec"></div>
<div class="abs" style="left:1027px;top:23px;width:1px;height:23px;background:#ececec"></div>
<div class="abs" style="left:1074px;top:23px;width:1px;height:23px;background:#ececec"></div>
<div class="abs" style="left:1134px;top:23px;width:1px;height:23px;background:#ececec"></div>
<div class="abs" style="left:1201px;top:23px;width:1px;height:23px;background:#ececec"></div>
<span class="cb" style="left:11px;top:29px"></span>
<span class="cb" style="left:45px;top:29px"><svg width="11" height="11" viewBox="0 0 11 11" style="position:absolute;left:-1px;top:-1px"><path d="M3 5.7L4.7 7.4L8.3 3.4" fill="none" stroke="#505050" stroke-width="1.15"/></svg></span>
<span class="abs" style="left:76px;top:32px;width:9px;height:9px;border-radius:50%;border:1px dashed #ebebeb"></span>
<div class="t" style="left:97.5px;top:29px;font-size:8.7px;line-height:11px;color:#4a86cf;font-weight:bold;letter-spacing:0.2px;transform:scaleX(0.8905);transform-origin:left center">AEX-20100002</div>
<div class="t" style="left:175.5px;top:29px;font-size:8.7px;line-height:11px;color:#3a3a3a;-webkit-text-stroke:0.22px #3a3a3a;letter-spacing:0.3px;transform:scaleX(0.8797);transform-origin:left center">133-23R345</div>
<div class="t" style="left:268.5px;top:29px;font-size:8.7px;line-height:11px;color:#3a3a3a;-webkit-text-stroke:0.22px #3a3a3a;letter-spacing:0.3px;transform:scaleX(0.9820);transform-origin:left center">111</div>
<div class="t" style="left:366.5px;top:29px;font-size:8.7px;line-height:11px;color:#4a86cf;font-weight:bold;letter-spacing:0.2px;transform:scaleX(0.9480);transform-origin:left center">IN-31152</div>
<div class="t" style="left:444px;width:67px;text-align:center;top:29px;font-size:8.7px;line-height:11px;color:#3a3a3a;-webkit-text-stroke:0.22px #3a3a3a;letter-spacing:0.3px;transform:scaleX(0.8524);transform-origin:center center">LAX</div>
<div class="t" style="right:635.5px;top:29px;font-size:8.7px;line-height:11px;color:#3a3a3a;-webkit-text-stroke:0.22px #3a3a3a;letter-spacing:0.3px;transform:scaleX(0.8877);transform-origin:right center">0.00</div>
<div class="t" style="right:567.5px;top:29px;font-size:8.7px;line-height:11px;color:#3a3a3a;-webkit-text-stroke:0.22px #3a3a3a;letter-spacing:0.3px;transform:scaleX(0.8877);transform-origin:right center">0.00</div>
<div class="t" style="right:514.5px;top:29px;font-size:8.7px;line-height:11px;color:#3a3a3a;-webkit-text-stroke:0.22px #3a3a3a;letter-spacing:0.3px;transform:scaleX(0.8877);transform-origin:right center">0.00</div>
<div class="t" style="left:705.5px;top:29px;font-size:8.7px;line-height:11px;color:#3a3a3a;-webkit-text-stroke:0.22px #3a3a3a;letter-spacing:0.3px;transform:scaleX(0.8883);transform-origin:left center">10-04-2032</div>
<div class="t" style="left:773.5px;top:29px;font-size:8.7px;line-height:11px;color:#3a3a3a;-webkit-text-stroke:0.22px #3a3a3a;letter-spacing:0.3px;transform:scaleX(0.8883);transform-origin:left center">10-18-2032</div>
<div class="t" style="left:837px;width:54px;text-align:center;top:29px;font-size:8.7px;line-height:11px;color:#3a3a3a;-webkit-text-stroke:0.22px #3a3a3a;letter-spacing:0.3px;transform:scaleX(0.8997);transform-origin:center center">0</div>
<div class="t" style="left:894.5px;top:29px;font-size:8.7px;line-height:11px;color:#3a3a3a;-webkit-text-stroke:0.22px #3a3a3a;letter-spacing:0.3px;transform:scaleX(0.8890);transform-origin:left center">A/R</div>
<div class="t" style="left:942.5px;top:29px;font-size:8.7px;line-height:11px;color:#3a3a3a;-webkit-text-stroke:0.22px #3a3a3a;letter-spacing:0.3px;transform:scaleX(0.8997);transform-origin:left center">5555</div>
<div class="t" style="left:1077.5px;top:29px;font-size:8.7px;line-height:11px;color:#3a3a3a;-webkit-text-stroke:0.22px #3a3a3a;letter-spacing:0.3px;transform:scaleX(0.8883);transform-origin:left center">10-04-2032</div>
<div class="t" style="left:1137.5px;top:29px;font-size:8.7px;line-height:11px;color:#3a3a3a;-webkit-text-stroke:0.22px #3a3a3a;letter-spacing:0.3px;transform:scaleX(0.9499);transform-origin:left center">Super Admin</div>
<div class="abs" style="left:0;top:46px;width:1213px;height:23px;background:#f9f9f9"></div>
<div class="abs" style="left:33px;top:46px;width:34px;height:23px;background:#f2c935"></div>
<div class="abs" style="left:94px;top:46px;width:1px;height:23px;background:#ececec"></div>
<div class="abs" style="left:172px;top:46px;width:1px;height:23px;background:#ececec"></div>
<div class="abs" style="left:265px;top:46px;width:1px;height:23px;background:#ececec"></div>
<div class="abs" style="left:363px;top:46px;width:1px;height:23px;background:#ececec"></div>
<div class="abs" style="left:444px;top:46px;width:1px;height:23px;background:#ececec"></div>
<div class="abs" style="left:511px;top:46px;width:1px;height:23px;background:#ececec"></div>
<div class="abs" style="left:581px;top:46px;width:1px;height:23px;background:#ececec"></div>
<div class="abs" style="left:649px;top:46px;width:1px;height:23px;background:#ececec"></div>
<div class="abs" style="left:702px;top:46px;width:1px;height:23px;background:#ececec"></div>
<div class="abs" style="left:770px;top:46px;width:1px;height:23px;background:#ececec"></div>
<div class="abs" style="left:837px;top:46px;width:1px;height:23px;background:#ececec"></div>
<div class="abs" style="left:891px;top:46px;width:1px;height:23px;background:#ececec"></div>
<div class="abs" style="left:939px;top:46px;width:1px;height:23px;background:#ececec"></div>
<div class="abs" style="left:1027px;top:46px;width:1px;height:23px;background:#ececec"></div>
<div class="abs" style="left:1074px;top:46px;width:1px;height:23px;background:#ececec"></div>
<div class="abs" style="left:1134px;top:46px;width:1px;height:23px;background:#ececec"></div>
<div class="abs" style="left:1201px;top:46px;width:1px;height:23px;background:#ececec"></div>
<span class="cb" style="left:11px;top:52px"></span>
<span class="cb" style="left:45px;top:52px"><svg width="11" height="11" viewBox="0 0 11 11" style="position:absolute;left:-1px;top:-1px"><path d="M3 5.7L4.7 7.4L8.3 3.4" fill="none" stroke="#505050" stroke-width="1.15"/></svg></span>
<span class="abs" style="left:76px;top:55px;width:9px;height:9px;border-radius:50%;border:1px dashed #ebebeb"></span>
<div class="t" style="left:97.5px;top:52px;font-size:8.7px;line-height:11px;color:#4a86cf;font-weight:bold;letter-spacing:0.2px;transform:scaleX(0.8905);transform-origin:left center">AEX-20100002</div>
<div class="t" style="left:175.5px;top:52px;font-size:8.7px;line-height:11px;color:#3a3a3a;-webkit-text-stroke:0.22px #3a3a3a;letter-spacing:0.3px;transform:scaleX(0.8797);transform-origin:left center">133-23R345</div>
<div class="t" style="left:268.5px;top:52px;font-size:8.7px;line-height:11px;color:#3a3a3a;-webkit-text-stroke:0.22px #3a3a3a;letter-spacing:0.3px;transform:scaleX(0.8891);transform-origin:left center">3M COMPANY</div>
<div class="t" style="left:366.5px;top:52px;font-size:8.7px;line-height:11px;color:#4a86cf;font-weight:bold;letter-spacing:0.2px;transform:scaleX(0.9171);transform-origin:left center">NP-00061</div>
<div class="t" style="left:444px;width:67px;text-align:center;top:52px;font-size:8.7px;line-height:11px;color:#3a3a3a;-webkit-text-stroke:0.22px #3a3a3a;letter-spacing:0.3px;transform:scaleX(0.8524);transform-origin:center center">LAX</div>
<div class="t" style="right:635.5px;top:52px;font-size:8.7px;line-height:11px;color:#3a3a3a;-webkit-text-stroke:0.22px #3a3a3a;letter-spacing:0.3px;transform:scaleX(0.8920);transform-origin:right center">300.00</div>
<div class="t" style="right:567.5px;top:52px;font-size:8.7px;line-height:11px;color:#3a3a3a;-webkit-text-stroke:0.22px #3a3a3a;letter-spacing:0.3px;transform:scaleX(0.8920);transform-origin:right center">100.00</div>
<div class="t" style="right:514.5px;top:52px;font-size:8.7px;line-height:11px;color:#3a3a3a;-webkit-text-stroke:0.22px #3a3a3a;letter-spacing:0.3px;transform:scaleX(0.8920);transform-origin:right center">200.00</div>
<div class="t" style="left:705.5px;top:52px;font-size:8.7px;line-height:11px;color:#3a3a3a;-webkit-text-stroke:0.22px #3a3a3a;letter-spacing:0.3px;transform:scaleX(0.8883);transform-origin:left center">10-04-2032</div>
<div class="t" style="left:773.5px;top:52px;font-size:8.7px;line-height:11px;color:#3a3a3a;-webkit-text-stroke:0.22px #3a3a3a;letter-spacing:0.3px;transform:scaleX(0.9006);transform-origin:left center">11-03-2032</div>
<div class="t" style="left:837px;width:54px;text-align:center;top:52px;font-size:8.7px;line-height:11px;color:#3a3a3a;-webkit-text-stroke:0.22px #3a3a3a;letter-spacing:0.3px;transform:scaleX(0.8997);transform-origin:center center">0</div>
<div class="t" style="left:894.5px;top:52px;font-size:8.7px;line-height:11px;color:#3a3a3a;-webkit-text-stroke:0.22px #3a3a3a;letter-spacing:0.3px;transform:scaleX(0.9046);transform-origin:left center">A/P</div>
<div class="abs" style="left:1047px;top:53px;line-height:0"><svg width="7" height="8" viewBox="0 0 7 8"><path d="M1.6 3.4V2.4A1.9 1.9 0 0 1 5.4 2.4V3.4" fill="none" stroke="#e8b634" stroke-width="1.1"/><rect x="0.6" y="3.4" width="5.8" height="4.4" rx="0.5" fill="#e8b634"/></svg></div>
<div class="t" style="left:1077.5px;top:52px;font-size:8.7px;line-height:11px;color:#3a3a3a;-webkit-text-stroke:0.22px #3a3a3a;letter-spacing:0.3px;transform:scaleX(0.8883);transform-origin:left center">10-04-2032</div>
<div class="t" style="left:1137.5px;top:52px;font-size:8.7px;line-height:11px;color:#3a3a3a;-webkit-text-stroke:0.22px #3a3a3a;letter-spacing:0.3px;transform:scaleX(0.9499);transform-origin:left center">Super Admin</div>
<div class="abs" style="left:0;top:69px;width:1213px;height:23px;background:#fdf8e8"></div>
<div class="abs" style="left:33px;top:69px;width:34px;height:23px;background:#f2c935"></div>
<div class="abs" style="left:94px;top:69px;width:1px;height:23px;background:#ececec"></div>
<div class="abs" style="left:172px;top:69px;width:1px;height:23px;background:#ececec"></div>
<div class="abs" style="left:265px;top:69px;width:1px;height:23px;background:#ececec"></div>
<div class="abs" style="left:363px;top:69px;width:1px;height:23px;background:#ececec"></div>
<div class="abs" style="left:444px;top:69px;width:1px;height:23px;background:#ececec"></div>
<div class="abs" style="left:511px;top:69px;width:1px;height:23px;background:#ececec"></div>
<div class="abs" style="left:581px;top:69px;width:1px;height:23px;background:#ececec"></div>
<div class="abs" style="left:649px;top:69px;width:1px;height:23px;background:#ececec"></div>
<div class="abs" style="left:702px;top:69px;width:1px;height:23px;background:#ececec"></div>
<div class="abs" style="left:770px;top:69px;width:1px;height:23px;background:#ececec"></div>
<div class="abs" style="left:837px;top:69px;width:1px;height:23px;background:#ececec"></div>
<div class="abs" style="left:891px;top:69px;width:1px;height:23px;background:#ececec"></div>
<div class="abs" style="left:939px;top:69px;width:1px;height:23px;background:#ececec"></div>
<div class="abs" style="left:1027px;top:69px;width:1px;height:23px;background:#ececec"></div>
<div class="abs" style="left:1074px;top:69px;width:1px;height:23px;background:#ececec"></div>
<div class="abs" style="left:1134px;top:69px;width:1px;height:23px;background:#ececec"></div>
<div class="abs" style="left:1201px;top:69px;width:1px;height:23px;background:#ececec"></div>
<span class="cb" style="left:11px;top:75px"><svg width="11" height="11" viewBox="0 0 11 11" style="position:absolute;left:-1px;top:-1px"><path d="M3 5.7L4.7 7.4L8.3 3.4" fill="none" stroke="#505050" stroke-width="1.15"/></svg></span>
<span class="cb" style="left:45px;top:75px"><svg width="11" height="11" viewBox="0 0 11 11" style="position:absolute;left:-1px;top:-1px"><path d="M3 5.7L4.7 7.4L8.3 3.4" fill="none" stroke="#505050" stroke-width="1.15"/></svg></span>
<span class="abs" style="left:76px;top:78px;width:9px;height:9px;border-radius:50%;border:1px dashed #ebebeb"></span>
<div class="t" style="left:97.5px;top:75px;font-size:8.7px;line-height:11px;color:#8a4fa8;font-weight:bold;letter-spacing:0.2px;transform:scaleX(0.8905);transform-origin:left center">AEX-20100002</div>
<div class="t" style="left:175.5px;top:75px;font-size:8.7px;line-height:11px;color:#3a3a3a;-webkit-text-stroke:0.22px #3a3a3a;letter-spacing:0.3px;transform:scaleX(0.8797);transform-origin:left center">133-23R345</div>
<div class="t" style="left:268.5px;top:75px;font-size:8.7px;line-height:11px;color:#3a3a3a;-webkit-text-stroke:0.22px #3a3a3a;letter-spacing:0.3px;transform:scaleX(0.8713);transform-origin:left center">ADAMS AND SONS</div>
<div class="t" style="left:366.5px;top:75px;font-size:8.7px;line-height:11px;color:#4a86cf;font-weight:bold;letter-spacing:0.2px;transform:scaleX(0.9224);transform-origin:left center">IN-30981-(1)</div>
<div class="t" style="left:444px;width:67px;text-align:center;top:75px;font-size:8.7px;line-height:11px;color:#3a3a3a;-webkit-text-stroke:0.22px #3a3a3a;letter-spacing:0.3px;transform:scaleX(0.8524);transform-origin:center center">LAX</div>
<div class="t" style="right:635.5px;top:75px;font-size:8.7px;line-height:11px;color:#3a3a3a;-webkit-text-stroke:0.22px #3a3a3a;letter-spacing:0.3px;transform:scaleX(0.8920);transform-origin:right center">310.50</div>
<div class="t" style="right:567.5px;top:75px;font-size:8.7px;line-height:11px;color:#3a3a3a;-webkit-text-stroke:0.22px #3a3a3a;letter-spacing:0.3px;transform:scaleX(0.8920);transform-origin:right center">303.00</div>
<div class="t" style="right:514.5px;top:75px;font-size:8.7px;line-height:11px;color:#3a3a3a;-webkit-text-stroke:0.22px #3a3a3a;letter-spacing:0.3px;transform:scaleX(0.8877);transform-origin:right center">7.50</div>
<div class="t" style="left:705.5px;top:75px;font-size:8.7px;line-height:11px;color:#3a3a3a;-webkit-text-stroke:0.22px #3a3a3a;letter-spacing:0.3px;transform:scaleX(0.8883);transform-origin:left center">10-04-2032</div>
<div class="t" style="left:773.5px;top:75px;font-size:8.7px;line-height:11px;color:#3a3a3a;-webkit-text-stroke:0.22px #3a3a3a;letter-spacing:0.3px;transform:scaleX(0.9006);transform-origin:left center">11-03-2032</div>
<div class="t" style="left:837px;width:54px;text-align:center;top:75px;font-size:8.7px;line-height:11px;color:#3a3a3a;-webkit-text-stroke:0.22px #3a3a3a;letter-spacing:0.3px;transform:scaleX(0.8997);transform-origin:center center">0</div>
<div class="t" style="left:894.5px;top:75px;font-size:8.7px;line-height:11px;color:#3a3a3a;-webkit-text-stroke:0.22px #3a3a3a;letter-spacing:0.3px;transform:scaleX(0.8890);transform-origin:left center">A/R</div>
<div class="t" style="left:942.5px;top:75px;font-size:8.7px;line-height:11px;color:#3a3a3a;-webkit-text-stroke:0.22px #3a3a3a;letter-spacing:0.3px;transform:scaleX(0.8997);transform-origin:left center">123</div>
<div class="abs" style="left:1047px;top:76px;line-height:0"><svg width="7" height="8" viewBox="0 0 7 8"><path d="M1.6 3.4V2.4A1.9 1.9 0 0 1 5.4 2.4V3.4" fill="none" stroke="#e8b634" stroke-width="1.1"/><rect x="0.6" y="3.4" width="5.8" height="4.4" rx="0.5" fill="#e8b634"/></svg></div>
<div class="t" style="left:1077.5px;top:75px;font-size:8.7px;line-height:11px;color:#3a3a3a;-webkit-text-stroke:0.22px #3a3a3a;letter-spacing:0.3px;transform:scaleX(0.8883);transform-origin:left center">10-04-2032</div>
<div class="t" style="left:1137.5px;top:75px;font-size:8.7px;line-height:11px;color:#3a3a3a;-webkit-text-stroke:0.22px #3a3a3a;letter-spacing:0.3px;transform:scaleX(0.9148);transform-origin:left center">Alex</div>
<div class="abs" style="left:0;top:92px;width:1213px;height:23px;background:#f9f9f9"></div>
<div class="abs" style="left:33px;top:92px;width:34px;height:23px;background:#f2c935"></div>
<div class="abs" style="left:94px;top:92px;width:1px;height:23px;background:#ececec"></div>
<div class="abs" style="left:172px;top:92px;width:1px;height:23px;background:#ececec"></div>
<div class="abs" style="left:265px;top:92px;width:1px;height:23px;background:#ececec"></div>
<div class="abs" style="left:363px;top:92px;width:1px;height:23px;background:#ececec"></div>
<div class="abs" style="left:444px;top:92px;width:1px;height:23px;background:#ececec"></div>
<div class="abs" style="left:511px;top:92px;width:1px;height:23px;background:#ececec"></div>
<div class="abs" style="left:581px;top:92px;width:1px;height:23px;background:#ececec"></div>
<div class="abs" style="left:649px;top:92px;width:1px;height:23px;background:#ececec"></div>
<div class="abs" style="left:702px;top:92px;width:1px;height:23px;background:#ececec"></div>
<div class="abs" style="left:770px;top:92px;width:1px;height:23px;background:#ececec"></div>
<div class="abs" style="left:837px;top:92px;width:1px;height:23px;background:#ececec"></div>
<div class="abs" style="left:891px;top:92px;width:1px;height:23px;background:#ececec"></div>
<div class="abs" style="left:939px;top:92px;width:1px;height:23px;background:#ececec"></div>
<div class="abs" style="left:1027px;top:92px;width:1px;height:23px;background:#ececec"></div>
<div class="abs" style="left:1074px;top:92px;width:1px;height:23px;background:#ececec"></div>
<div class="abs" style="left:1134px;top:92px;width:1px;height:23px;background:#ececec"></div>
<div class="abs" style="left:1201px;top:92px;width:1px;height:23px;background:#ececec"></div>
<span class="cb" style="left:11px;top:98px"></span>
<span class="cb" style="left:45px;top:98px"><svg width="11" height="11" viewBox="0 0 11 11" style="position:absolute;left:-1px;top:-1px"><path d="M3 5.7L4.7 7.4L8.3 3.4" fill="none" stroke="#505050" stroke-width="1.15"/></svg></span>
<span class="abs" style="left:76px;top:101px;width:9px;height:9px;border-radius:50%;border:1px dashed #ebebeb"></span>
<div class="t" style="left:97.5px;top:98px;font-size:8.7px;line-height:11px;color:#4a86cf;font-weight:bold;letter-spacing:0.2px;transform:scaleX(0.8905);transform-origin:left center">AEX-20100002</div>
<div class="t" style="left:175.5px;top:98px;font-size:8.7px;line-height:11px;color:#3a3a3a;-webkit-text-stroke:0.22px #3a3a3a;letter-spacing:0.3px;transform:scaleX(0.8797);transform-origin:left center">133-23R345</div>
<div class="t" style="left:268.5px;top:98px;font-size:8.7px;line-height:11px;color:#3a3a3a;-webkit-text-stroke:0.22px #3a3a3a;letter-spacing:0.3px;transform:scaleX(0.9820);transform-origin:left center">111</div>
<div class="t" style="left:366.5px;top:98px;font-size:8.7px;line-height:11px;color:#8a4fa8;font-weight:bold;letter-spacing:0.2px;transform:scaleX(0.8939);transform-origin:left center">DC-19330</div>
<div class="t" style="left:444px;width:67px;text-align:center;top:98px;font-size:8.7px;line-height:11px;color:#3a3a3a;-webkit-text-stroke:0.22px #3a3a3a;letter-spacing:0.3px;transform:scaleX(0.8524);transform-origin:center center">LAX</div>
<div class="t" style="right:635.5px;top:98px;font-size:8.7px;line-height:11px;color:#3a3a3a;-webkit-text-stroke:0.22px #3a3a3a;letter-spacing:0.3px;transform:scaleX(0.8877);transform-origin:right center">0.00</div>
<div class="t" style="right:567.5px;top:98px;font-size:8.7px;line-height:11px;color:#3a3a3a;-webkit-text-stroke:0.22px #3a3a3a;letter-spacing:0.3px;transform:scaleX(0.8877);transform-origin:right center">0.00</div>
<div class="t" style="right:514.5px;top:98px;font-size:8.7px;line-height:11px;color:#3a3a3a;-webkit-text-stroke:0.22px #3a3a3a;letter-spacing:0.3px;transform:scaleX(0.8877);transform-origin:right center">0.00</div>
<div class="t" style="left:705.5px;top:98px;font-size:8.7px;line-height:11px;color:#3a3a3a;-webkit-text-stroke:0.22px #3a3a3a;letter-spacing:0.3px;transform:scaleX(0.8883);transform-origin:left center">10-04-2032</div>
<div class="t" style="left:773.5px;top:98px;font-size:8.7px;line-height:11px;color:#3a3a3a;-webkit-text-stroke:0.22px #3a3a3a;letter-spacing:0.3px;transform:scaleX(0.8883);transform-origin:left center">10-04-2032</div>
<div class="t" style="left:837px;width:54px;text-align:center;top:98px;font-size:8.7px;line-height:11px;color:#3a3a3a;-webkit-text-stroke:0.22px #3a3a3a;letter-spacing:0.3px;transform:scaleX(0.8997);transform-origin:center center">0</div>
<div class="t" style="left:894.5px;top:98px;font-size:8.7px;line-height:11px;color:#3a3a3a;-webkit-text-stroke:0.22px #3a3a3a;letter-spacing:0.3px;transform:scaleX(0.9675);transform-origin:left center">Debit</div>
<div class="t" style="left:1077.5px;top:98px;font-size:8.7px;line-height:11px;color:#3a3a3a;-webkit-text-stroke:0.22px #3a3a3a;letter-spacing:0.3px;transform:scaleX(0.8883);transform-origin:left center">10-04-2032</div>
<div class="t" style="left:1137.5px;top:98px;font-size:8.7px;line-height:11px;color:#3a3a3a;-webkit-text-stroke:0.22px #3a3a3a;letter-spacing:0.3px;transform:scaleX(0.9499);transform-origin:left center">Super Admin</div>
<div class="abs" style="left:0;top:115px;width:1213px;height:23px;background:#ffffff"></div>
<div class="abs" style="left:33px;top:115px;width:34px;height:23px;background:#f2c935"></div>
<div class="abs" style="left:94px;top:115px;width:1px;height:23px;background:#ececec"></div>
<div class="abs" style="left:172px;top:115px;width:1px;height:23px;background:#ececec"></div>
<div class="abs" style="left:265px;top:115px;width:1px;height:23px;background:#ececec"></div>
<div class="abs" style="left:363px;top:115px;width:1px;height:23px;background:#ececec"></div>
<div class="abs" style="left:444px;top:115px;width:1px;height:23px;background:#ececec"></div>
<div class="abs" style="left:511px;top:115px;width:1px;height:23px;background:#ececec"></div>
<div class="abs" style="left:581px;top:115px;width:1px;height:23px;background:#ececec"></div>
<div class="abs" style="left:649px;top:115px;width:1px;height:23px;background:#ececec"></div>
<div class="abs" style="left:702px;top:115px;width:1px;height:23px;background:#ececec"></div>
<div class="abs" style="left:770px;top:115px;width:1px;height:23px;background:#ececec"></div>
<div class="abs" style="left:837px;top:115px;width:1px;height:23px;background:#ececec"></div>
<div class="abs" style="left:891px;top:115px;width:1px;height:23px;background:#ececec"></div>
<div class="abs" style="left:939px;top:115px;width:1px;height:23px;background:#ececec"></div>
<div class="abs" style="left:1027px;top:115px;width:1px;height:23px;background:#ececec"></div>
<div class="abs" style="left:1074px;top:115px;width:1px;height:23px;background:#ececec"></div>
<div class="abs" style="left:1134px;top:115px;width:1px;height:23px;background:#ececec"></div>
<div class="abs" style="left:1201px;top:115px;width:1px;height:23px;background:#ececec"></div>
<span class="cb" style="left:11px;top:121px"></span>
<span class="cb" style="left:45px;top:121px"><svg width="11" height="11" viewBox="0 0 11 11" style="position:absolute;left:-1px;top:-1px"><path d="M3 5.7L4.7 7.4L8.3 3.4" fill="none" stroke="#505050" stroke-width="1.15"/></svg></span>
<span class="abs" style="left:76px;top:124px;width:9px;height:9px;border-radius:50%;border:1px dashed #ebebeb"></span>
<div class="t" style="left:97.5px;top:121px;font-size:8.7px;line-height:11px;color:#4a86cf;font-weight:bold;letter-spacing:0.2px;transform:scaleX(0.8905);transform-origin:left center">AEX-20100002</div>
<div class="t" style="left:175.5px;top:121px;font-size:8.7px;line-height:11px;color:#3a3a3a;-webkit-text-stroke:0.22px #3a3a3a;letter-spacing:0.3px;transform:scaleX(0.8797);transform-origin:left center">133-23R345</div>
<div class="t" style="left:268.5px;top:121px;font-size:8.7px;line-height:11px;color:#3a3a3a;-webkit-text-stroke:0.22px #3a3a3a;letter-spacing:0.3px;transform:scaleX(0.8891);transform-origin:left center">3M COMPANY</div>
<div class="t" style="left:366.5px;top:121px;font-size:8.7px;line-height:11px;color:#4a86cf;font-weight:bold;letter-spacing:0.2px;transform:scaleX(0.9358);transform-origin:left center">IN-31017</div>
<div class="t" style="left:444px;width:67px;text-align:center;top:121px;font-size:8.7px;line-height:11px;color:#3a3a3a;-webkit-text-stroke:0.22px #3a3a3a;letter-spacing:0.3px;transform:scaleX(0.8524);transform-origin:center center">LAX</div>
<div class="t" style="right:635.5px;top:121px;font-size:8.7px;line-height:11px;color:#3a3a3a;-webkit-text-stroke:0.22px #3a3a3a;letter-spacing:0.3px;transform:scaleX(0.8904);transform-origin:right center">20.00</div>
<div class="t" style="right:567.5px;top:121px;font-size:8.7px;line-height:11px;color:#3a3a3a;-webkit-text-stroke:0.22px #3a3a3a;letter-spacing:0.3px;transform:scaleX(0.8904);transform-origin:right center">30.00</div>
<div class="t" style="right:514.5px;top:121px;font-size:8.7px;line-height:11px;color:#3a3a3a;-webkit-text-stroke:0.22px #3a3a3a;letter-spacing:0.3px;transform:scaleX(0.8813);transform-origin:right center">-10.00</div>
<div class="t" style="left:705.5px;top:121px;font-size:8.7px;line-height:11px;color:#3a3a3a;-webkit-text-stroke:0.22px #3a3a3a;letter-spacing:0.3px;transform:scaleX(0.8883);transform-origin:left center">10-04-2032</div>
<div class="t" style="left:773.5px;top:121px;font-size:8.7px;line-height:11px;color:#3a3a3a;-webkit-text-stroke:0.22px #3a3a3a;letter-spacing:0.3px;transform:scaleX(0.9006);transform-origin:left center">11-03-2032</div>
<div class="t" style="left:837px;width:54px;text-align:center;top:121px;font-size:8.7px;line-height:11px;color:#3a3a3a;-webkit-text-stroke:0.22px #3a3a3a;letter-spacing:0.3px;transform:scaleX(0.8997);transform-origin:center center">0</div>
<div class="t" style="left:894.5px;top:121px;font-size:8.7px;line-height:11px;color:#3a3a3a;-webkit-text-stroke:0.22px #3a3a3a;letter-spacing:0.3px;transform:scaleX(0.8890);transform-origin:left center">A/R</div>
<div class="abs" style="left:1047px;top:122px;line-height:0"><svg width="7" height="8" viewBox="0 0 7 8"><path d="M1.6 3.4V2.4A1.9 1.9 0 0 1 5.4 2.4V3.4" fill="none" stroke="#e8b634" stroke-width="1.1"/><rect x="0.6" y="3.4" width="5.8" height="4.4" rx="0.5" fill="#e8b634"/></svg></div>
<div class="t" style="left:1077.5px;top:121px;font-size:8.7px;line-height:11px;color:#3a3a3a;-webkit-text-stroke:0.22px #3a3a3a;letter-spacing:0.3px;transform:scaleX(0.8883);transform-origin:left center">10-04-2032</div>
<div class="t" style="left:1137.5px;top:121px;font-size:8.7px;line-height:11px;color:#3a3a3a;-webkit-text-stroke:0.22px #3a3a3a;letter-spacing:0.3px;transform:scaleX(0.9499);transform-origin:left center">Super Admin</div>
<div class="abs" style="left:0;top:138px;width:1213px;height:23px;background:#f9f9f9"></div>
<div class="abs" style="left:33px;top:138px;width:34px;height:23px;background:#f2c935"></div>
<div class="abs" style="left:94px;top:138px;width:1px;height:23px;background:#ececec"></div>
<div class="abs" style="left:172px;top:138px;width:1px;height:23px;background:#ececec"></div>
<div class="abs" style="left:265px;top:138px;width:1px;height:23px;background:#ececec"></div>
<div class="abs" style="left:363px;top:138px;width:1px;height:23px;background:#ececec"></div>
<div class="abs" style="left:444px;top:138px;width:1px;height:23px;background:#ececec"></div>
<div class="abs" style="left:511px;top:138px;width:1px;height:23px;background:#ececec"></div>
<div class="abs" style="left:581px;top:138px;width:1px;height:23px;background:#ececec"></div>
<div class="abs" style="left:649px;top:138px;width:1px;height:23px;background:#ececec"></div>
<div class="abs" style="left:702px;top:138px;width:1px;height:23px;background:#ececec"></div>
<div class="abs" style="left:770px;top:138px;width:1px;height:23px;background:#ececec"></div>
<div class="abs" style="left:837px;top:138px;width:1px;height:23px;background:#ececec"></div>
<div class="abs" style="left:891px;top:138px;width:1px;height:23px;background:#ececec"></div>
<div class="abs" style="left:939px;top:138px;width:1px;height:23px;background:#ececec"></div>
<div class="abs" style="left:1027px;top:138px;width:1px;height:23px;background:#ececec"></div>
<div class="abs" style="left:1074px;top:138px;width:1px;height:23px;background:#ececec"></div>
<div class="abs" style="left:1134px;top:138px;width:1px;height:23px;background:#ececec"></div>
<div class="abs" style="left:1201px;top:138px;width:1px;height:23px;background:#ececec"></div>
<span class="cb" style="left:11px;top:144px"></span>
<span class="cb" style="left:45px;top:144px"><svg width="11" height="11" viewBox="0 0 11 11" style="position:absolute;left:-1px;top:-1px"><path d="M3 5.7L4.7 7.4L8.3 3.4" fill="none" stroke="#505050" stroke-width="1.15"/></svg></span>
<span class="abs" style="left:76px;top:147px;width:9px;height:9px;border-radius:50%;border:1px dashed #ebebeb"></span>
<div class="t" style="left:97.5px;top:144px;font-size:8.7px;line-height:11px;color:#4a86cf;font-weight:bold;letter-spacing:0.2px;transform:scaleX(0.8905);transform-origin:left center">AEX-20100002</div>
<div class="t" style="left:175.5px;top:144px;font-size:8.7px;line-height:11px;color:#3a3a3a;-webkit-text-stroke:0.22px #3a3a3a;letter-spacing:0.3px;transform:scaleX(0.8797);transform-origin:left center">133-23R345</div>
<div class="t" style="left:268.5px;top:144px;font-size:8.7px;line-height:11px;color:#3a3a3a;-webkit-text-stroke:0.22px #3a3a3a;letter-spacing:0.3px;transform:scaleX(0.8589);transform-origin:left center">AARON AIRLINES</div>
<div class="t" style="left:366.5px;top:144px;font-size:8.7px;line-height:11px;color:#4a86cf;font-weight:bold;letter-spacing:0.2px;transform:scaleX(0.8939);transform-origin:left center">DC-19266</div>
<div class="t" style="left:444px;width:67px;text-align:center;top:144px;font-size:8.7px;line-height:11px;color:#3a3a3a;-webkit-text-stroke:0.22px #3a3a3a;letter-spacing:0.3px;transform:scaleX(0.8524);transform-origin:center center">LAX</div>
<div class="t" style="right:635.5px;top:144px;font-size:8.7px;line-height:11px;color:#3a3a3a;-webkit-text-stroke:0.22px #3a3a3a;letter-spacing:0.3px;transform:scaleX(0.8920);transform-origin:right center">290.00</div>
<div class="t" style="right:567.5px;top:144px;font-size:8.7px;line-height:11px;color:#3a3a3a;-webkit-text-stroke:0.22px #3a3a3a;letter-spacing:0.3px;transform:scaleX(0.8843);transform-origin:right center">-210.00</div>
<div class="t" style="right:514.5px;top:144px;font-size:8.7px;line-height:11px;color:#3a3a3a;-webkit-text-stroke:0.22px #3a3a3a;letter-spacing:0.3px;transform:scaleX(0.8920);transform-origin:right center">500.00</div>
<div class="t" style="left:705.5px;top:144px;font-size:8.7px;line-height:11px;color:#3a3a3a;-webkit-text-stroke:0.22px #3a3a3a;letter-spacing:0.3px;transform:scaleX(0.8883);transform-origin:left center">10-04-2032</div>
<div class="t" style="left:773.5px;top:144px;font-size:8.7px;line-height:11px;color:#3a3a3a;-webkit-text-stroke:0.22px #3a3a3a;letter-spacing:0.3px;transform:scaleX(0.9006);transform-origin:left center">11-03-2032</div>
<div class="t" style="left:837px;width:54px;text-align:center;top:144px;font-size:8.7px;line-height:11px;color:#3a3a3a;-webkit-text-stroke:0.22px #3a3a3a;letter-spacing:0.3px;transform:scaleX(0.8997);transform-origin:center center">0</div>
<div class="t" style="left:894.5px;top:144px;font-size:8.7px;line-height:11px;color:#3a3a3a;-webkit-text-stroke:0.22px #3a3a3a;letter-spacing:0.3px;transform:scaleX(0.9675);transform-origin:left center">Debit</div>
<div class="abs" style="left:1047px;top:145px;line-height:0"><svg width="7" height="8" viewBox="0 0 7 8"><path d="M1.6 3.4V2.4A1.9 1.9 0 0 1 5.4 2.4V3.4" fill="none" stroke="#e8b634" stroke-width="1.1"/><rect x="0.6" y="3.4" width="5.8" height="4.4" rx="0.5" fill="#e8b634"/></svg></div>
<div class="t" style="left:1077.5px;top:144px;font-size:8.7px;line-height:11px;color:#3a3a3a;-webkit-text-stroke:0.22px #3a3a3a;letter-spacing:0.3px;transform:scaleX(0.8883);transform-origin:left center">10-04-2032</div>
<div class="t" style="left:1137.5px;top:144px;font-size:8.7px;line-height:11px;color:#3a3a3a;-webkit-text-stroke:0.22px #3a3a3a;letter-spacing:0.3px;transform:scaleX(0.9148);transform-origin:left center">Alex</div>
<div class="abs" style="left:0;top:161px;width:1213px;height:23px;background:#fdf8e8"></div>
<div class="abs" style="left:33px;top:161px;width:34px;height:23px;background:#f2c935"></div>
<div class="abs" style="left:94px;top:161px;width:1px;height:23px;background:#ececec"></div>
<div class="abs" style="left:172px;top:161px;width:1px;height:23px;background:#ececec"></div>
<div class="abs" style="left:265px;top:161px;width:1px;height:23px;background:#ececec"></div>
<div class="abs" style="left:363px;top:161px;width:1px;height:23px;background:#ececec"></div>
<div class="abs" style="left:444px;top:161px;width:1px;height:23px;background:#ececec"></div>
<div class="abs" style="left:511px;top:161px;width:1px;height:23px;background:#ececec"></div>
<div class="abs" style="left:581px;top:161px;width:1px;height:23px;background:#ececec"></div>
<div class="abs" style="left:649px;top:161px;width:1px;height:23px;background:#ececec"></div>
<div class="abs" style="left:702px;top:161px;width:1px;height:23px;background:#ececec"></div>
<div class="abs" style="left:770px;top:161px;width:1px;height:23px;background:#ececec"></div>
<div class="abs" style="left:837px;top:161px;width:1px;height:23px;background:#ececec"></div>
<div class="abs" style="left:891px;top:161px;width:1px;height:23px;background:#ececec"></div>
<div class="abs" style="left:939px;top:161px;width:1px;height:23px;background:#ececec"></div>
<div class="abs" style="left:1027px;top:161px;width:1px;height:23px;background:#ececec"></div>
<div class="abs" style="left:1074px;top:161px;width:1px;height:23px;background:#ececec"></div>
<div class="abs" style="left:1134px;top:161px;width:1px;height:23px;background:#ececec"></div>
<div class="abs" style="left:1201px;top:161px;width:1px;height:23px;background:#ececec"></div>
<span class="cb" style="left:11px;top:167px"><svg width="11" height="11" viewBox="0 0 11 11" style="position:absolute;left:-1px;top:-1px"><path d="M3 5.7L4.7 7.4L8.3 3.4" fill="none" stroke="#505050" stroke-width="1.15"/></svg></span>
<span class="cb" style="left:45px;top:167px"><svg width="11" height="11" viewBox="0 0 11 11" style="position:absolute;left:-1px;top:-1px"><path d="M3 5.7L4.7 7.4L8.3 3.4" fill="none" stroke="#505050" stroke-width="1.15"/></svg></span>
<span class="abs" style="left:76px;top:170px;width:9px;height:9px;border-radius:50%;border:1px dashed #ebebeb"></span>
<div class="t" style="left:97.5px;top:167px;font-size:8.7px;line-height:11px;color:#8a4fa8;font-weight:bold;letter-spacing:0.2px;transform:scaleX(0.8905);transform-origin:left center">AEX-20100002</div>
<div class="t" style="left:175.5px;top:167px;font-size:8.7px;line-height:11px;color:#3a3a3a;-webkit-text-stroke:0.22px #3a3a3a;letter-spacing:0.3px;transform:scaleX(0.8797);transform-origin:left center">133-23R345</div>
<div class="t" style="left:268.5px;top:167px;font-size:8.7px;line-height:11px;color:#3a3a3a;-webkit-text-stroke:0.22px #3a3a3a;letter-spacing:0.3px;transform:scaleX(0.8713);transform-origin:left center">ADAMS AND SONS</div>
<div class="t" style="left:366.5px;top:167px;font-size:8.7px;line-height:11px;color:#4a86cf;font-weight:bold;letter-spacing:0.2px;transform:scaleX(0.9358);transform-origin:left center">IN-30981</div>
<div class="t" style="left:444px;width:67px;text-align:center;top:167px;font-size:8.7px;line-height:11px;color:#3a3a3a;-webkit-text-stroke:0.22px #3a3a3a;letter-spacing:0.3px;transform:scaleX(0.8524);transform-origin:center center">LAX</div>
<div class="t" style="right:635.5px;top:167px;font-size:8.7px;line-height:11px;color:#3a3a3a;-webkit-text-stroke:0.22px #3a3a3a;letter-spacing:0.3px;transform:scaleX(0.8920);transform-origin:right center">320.00</div>
<div class="t" style="right:567.5px;top:167px;font-size:8.7px;line-height:11px;color:#3a3a3a;-webkit-text-stroke:0.22px #3a3a3a;letter-spacing:0.3px;transform:scaleX(0.8920);transform-origin:right center">320.00</div>
<div class="t" style="right:514.5px;top:167px;font-size:8.7px;line-height:11px;color:#3a3a3a;-webkit-text-stroke:0.22px #3a3a3a;letter-spacing:0.3px;transform:scaleX(0.8877);transform-origin:right center">0.00</div>
<div class="t" style="left:705.5px;top:167px;font-size:8.7px;line-height:11px;color:#3a3a3a;-webkit-text-stroke:0.22px #3a3a3a;letter-spacing:0.3px;transform:scaleX(0.8883);transform-origin:left center">10-04-2032</div>
<div class="t" style="left:773.5px;top:167px;font-size:8.7px;line-height:11px;color:#3a3a3a;-webkit-text-stroke:0.22px #3a3a3a;letter-spacing:0.3px;transform:scaleX(0.9006);transform-origin:left center">11-03-2032</div>
<div class="t" style="left:837px;width:54px;text-align:center;top:167px;font-size:8.7px;line-height:11px;color:#3a3a3a;-webkit-text-stroke:0.22px #3a3a3a;letter-spacing:0.3px;transform:scaleX(0.8997);transform-origin:center center">0</div>
<div class="t" style="left:894.5px;top:167px;font-size:8.7px;line-height:11px;color:#3a3a3a;-webkit-text-stroke:0.22px #3a3a3a;letter-spacing:0.3px;transform:scaleX(0.8890);transform-origin:left center">A/R</div>
<div class="t" style="left:942.5px;top:167px;font-size:8.7px;line-height:11px;color:#3a3a3a;-webkit-text-stroke:0.22px #3a3a3a;letter-spacing:0.3px;transform:scaleX(0.8997);transform-origin:left center">123</div>
<div class="abs" style="left:1047px;top:168px;line-height:0"><svg width="7" height="8" viewBox="0 0 7 8"><path d="M1.6 3.4V2.4A1.9 1.9 0 0 1 5.4 2.4V3.4" fill="none" stroke="#e8b634" stroke-width="1.1"/><rect x="0.6" y="3.4" width="5.8" height="4.4" rx="0.5" fill="#e8b634"/></svg></div>
<div class="t" style="left:1077.5px;top:167px;font-size:8.7px;line-height:11px;color:#3a3a3a;-webkit-text-stroke:0.22px #3a3a3a;letter-spacing:0.3px;transform:scaleX(0.8883);transform-origin:left center">10-04-2032</div>
<div class="t" style="left:1137.5px;top:167px;font-size:8.7px;line-height:11px;color:#3a3a3a;-webkit-text-stroke:0.22px #3a3a3a;letter-spacing:0.3px;transform:scaleX(0.9148);transform-origin:left center">Alex</div>
<div class="abs" style="left:0;top:184px;width:1213px;height:23px;background:#f9f9f9"></div>
<div class="abs" style="left:33px;top:184px;width:34px;height:23px;background:#f2c935"></div>
<div class="abs" style="left:94px;top:184px;width:1px;height:23px;background:#ececec"></div>
<div class="abs" style="left:172px;top:184px;width:1px;height:23px;background:#ececec"></div>
<div class="abs" style="left:265px;top:184px;width:1px;height:23px;background:#ececec"></div>
<div class="abs" style="left:363px;top:184px;width:1px;height:23px;background:#ececec"></div>
<div class="abs" style="left:444px;top:184px;width:1px;height:23px;background:#ececec"></div>
<div class="abs" style="left:511px;top:184px;width:1px;height:23px;background:#ececec"></div>
<div class="abs" style="left:581px;top:184px;width:1px;height:23px;background:#ececec"></div>
<div class="abs" style="left:649px;top:184px;width:1px;height:23px;background:#ececec"></div>
<div class="abs" style="left:702px;top:184px;width:1px;height:23px;background:#ececec"></div>
<div class="abs" style="left:770px;top:184px;width:1px;height:23px;background:#ececec"></div>
<div class="abs" style="left:837px;top:184px;width:1px;height:23px;background:#ececec"></div>
<div class="abs" style="left:891px;top:184px;width:1px;height:23px;background:#ececec"></div>
<div class="abs" style="left:939px;top:184px;width:1px;height:23px;background:#ececec"></div>
<div class="abs" style="left:1027px;top:184px;width:1px;height:23px;background:#ececec"></div>
<div class="abs" style="left:1074px;top:184px;width:1px;height:23px;background:#ececec"></div>
<div class="abs" style="left:1134px;top:184px;width:1px;height:23px;background:#ececec"></div>
<div class="abs" style="left:1201px;top:184px;width:1px;height:23px;background:#ececec"></div>
<span class="cb" style="left:11px;top:190px"></span>
<span class="cb" style="left:45px;top:190px"><svg width="11" height="11" viewBox="0 0 11 11" style="position:absolute;left:-1px;top:-1px"><path d="M3 5.7L4.7 7.4L8.3 3.4" fill="none" stroke="#505050" stroke-width="1.15"/></svg></span>
<span class="abs" style="left:76px;top:193px;width:9px;height:9px;border-radius:50%;border:1px dashed #ebebeb"></span>
<div class="t" style="left:97.5px;top:190px;font-size:8.7px;line-height:11px;color:#4a86cf;font-weight:bold;letter-spacing:0.2px;transform:scaleX(0.8905);transform-origin:left center">AEX-20100002</div>
<div class="t" style="left:175.5px;top:190px;font-size:8.7px;line-height:11px;color:#3a3a3a;-webkit-text-stroke:0.22px #3a3a3a;letter-spacing:0.3px;transform:scaleX(0.8797);transform-origin:left center">133-23R345</div>
<div class="t" style="left:268.5px;top:190px;font-size:8.7px;line-height:11px;color:#3a3a3a;-webkit-text-stroke:0.22px #3a3a3a;letter-spacing:0.3px;transform:scaleX(0.8589);transform-origin:left center">AARON AIRLINES</div>
<div class="t" style="left:366.5px;top:190px;font-size:8.7px;line-height:11px;color:#4a86cf;font-weight:bold;letter-spacing:0.2px;transform:scaleX(0.9358);transform-origin:left center">IN-30908</div>
<div class="t" style="left:444px;width:67px;text-align:center;top:190px;font-size:8.7px;line-height:11px;color:#3a3a3a;-webkit-text-stroke:0.22px #3a3a3a;letter-spacing:0.3px;transform:scaleX(0.8524);transform-origin:center center">LAX</div>
<div class="t" style="right:635.5px;top:190px;font-size:8.7px;line-height:11px;color:#3a3a3a;-webkit-text-stroke:0.22px #3a3a3a;letter-spacing:0.3px;transform:scaleX(0.8860);transform-origin:right center">6,421.90</div>
<div class="t" style="right:567.5px;top:190px;font-size:8.7px;line-height:11px;color:#3a3a3a;-webkit-text-stroke:0.22px #3a3a3a;letter-spacing:0.3px;transform:scaleX(0.8904);transform-origin:right center">50.00</div>
<div class="t" style="right:514.5px;top:190px;font-size:8.7px;line-height:11px;color:#3a3a3a;-webkit-text-stroke:0.22px #3a3a3a;letter-spacing:0.3px;transform:scaleX(0.8860);transform-origin:right center">6,371.90</div>
<div class="t" style="left:705.5px;top:190px;font-size:8.7px;line-height:11px;color:#3a3a3a;-webkit-text-stroke:0.22px #3a3a3a;letter-spacing:0.3px;transform:scaleX(0.8883);transform-origin:left center">10-04-2032</div>
<div class="t" style="left:773.5px;top:190px;font-size:8.7px;line-height:11px;color:#3a3a3a;-webkit-text-stroke:0.22px #3a3a3a;letter-spacing:0.3px;transform:scaleX(0.9006);transform-origin:left center">11-03-2032</div>
<div class="t" style="left:837px;width:54px;text-align:center;top:190px;font-size:8.7px;line-height:11px;color:#3a3a3a;-webkit-text-stroke:0.22px #3a3a3a;letter-spacing:0.3px;transform:scaleX(0.8997);transform-origin:center center">0</div>
<div class="t" style="left:894.5px;top:190px;font-size:8.7px;line-height:11px;color:#3a3a3a;-webkit-text-stroke:0.22px #3a3a3a;letter-spacing:0.3px;transform:scaleX(0.8890);transform-origin:left center">A/R</div>
<div class="abs" style="left:1047px;top:191px;line-height:0"><svg width="7" height="8" viewBox="0 0 7 8"><path d="M1.6 3.4V2.4A1.9 1.9 0 0 1 5.4 2.4V3.4" fill="none" stroke="#e8b634" stroke-width="1.1"/><rect x="0.6" y="3.4" width="5.8" height="4.4" rx="0.5" fill="#e8b634"/></svg></div>
<div class="t" style="left:1077.5px;top:190px;font-size:8.7px;line-height:11px;color:#3a3a3a;-webkit-text-stroke:0.22px #3a3a3a;letter-spacing:0.3px;transform:scaleX(0.8883);transform-origin:left center">10-04-2032</div>
<div class="t" style="left:1137.5px;top:190px;font-size:8.7px;line-height:11px;color:#3a3a3a;-webkit-text-stroke:0.22px #3a3a3a;letter-spacing:0.3px;transform:scaleX(0.9600);transform-origin:left center">Brian</div>
<div class="abs" style="left:0;top:207px;width:1213px;height:23px;background:#ffffff"></div>
<div class="abs" style="left:33px;top:207px;width:1px;height:23px;background:#ececec"></div>
<div class="abs" style="left:66px;top:207px;width:1px;height:23px;background:#ececec"></div>
<div class="abs" style="left:94px;top:207px;width:1px;height:23px;background:#ececec"></div>
<div class="abs" style="left:172px;top:207px;width:1px;height:23px;background:#ececec"></div>
<div class="abs" style="left:265px;top:207px;width:1px;height:23px;background:#ececec"></div>
<div class="abs" style="left:363px;top:207px;width:1px;height:23px;background:#ececec"></div>
<div class="abs" style="left:444px;top:207px;width:1px;height:23px;background:#ececec"></div>
<div class="abs" style="left:511px;top:207px;width:1px;height:23px;background:#ececec"></div>
<div class="abs" style="left:581px;top:207px;width:1px;height:23px;background:#ececec"></div>
<div class="abs" style="left:649px;top:207px;width:1px;height:23px;background:#ececec"></div>
<div class="abs" style="left:702px;top:207px;width:1px;height:23px;background:#ececec"></div>
<div class="abs" style="left:770px;top:207px;width:1px;height:23px;background:#ececec"></div>
<div class="abs" style="left:837px;top:207px;width:1px;height:23px;background:#ececec"></div>
<div class="abs" style="left:891px;top:207px;width:1px;height:23px;background:#ececec"></div>
<div class="abs" style="left:939px;top:207px;width:1px;height:23px;background:#ececec"></div>
<div class="abs" style="left:1027px;top:207px;width:1px;height:23px;background:#ececec"></div>
<div class="abs" style="left:1074px;top:207px;width:1px;height:23px;background:#ececec"></div>
<div class="abs" style="left:1134px;top:207px;width:1px;height:23px;background:#ececec"></div>
<div class="abs" style="left:1201px;top:207px;width:1px;height:23px;background:#ececec"></div>
<span class="cb" style="left:11px;top:213px"></span>
<span class="cb" style="left:45px;top:213px"></span>
<span class="abs" style="left:76px;top:216px;width:9px;height:9px;border-radius:50%;border:1px dashed #ebebeb"></span>
<div class="t" style="left:97.5px;top:213px;font-size:8.7px;line-height:11px;color:#4a86cf;font-weight:bold;letter-spacing:0.2px;transform:scaleX(0.8933);transform-origin:left center">SMS-21040003</div>
<div class="t" style="left:268.5px;top:213px;font-size:8.7px;line-height:11px;color:#3a3a3a;-webkit-text-stroke:0.22px #3a3a3a;letter-spacing:0.3px;transform:scaleX(0.8891);transform-origin:left center">3M COMPANY</div>
<div class="t" style="left:366.5px;top:213px;font-size:8.7px;line-height:11px;color:#4a86cf;font-weight:bold;letter-spacing:0.2px;transform:scaleX(0.8939);transform-origin:left center">DC-19344</div>
<div class="t" style="left:444px;width:67px;text-align:center;top:213px;font-size:8.7px;line-height:11px;color:#3a3a3a;-webkit-text-stroke:0.22px #3a3a3a;letter-spacing:0.3px;transform:scaleX(0.8524);transform-origin:center center">LAX</div>
<div class="t" style="right:635.5px;top:213px;font-size:8.7px;line-height:11px;color:#3a3a3a;-webkit-text-stroke:0.22px #3a3a3a;letter-spacing:0.3px;transform:scaleX(0.8860);transform-origin:right center">1,000.00</div>
<div class="t" style="right:567.5px;top:213px;font-size:8.7px;line-height:11px;color:#3a3a3a;-webkit-text-stroke:0.22px #3a3a3a;letter-spacing:0.3px;transform:scaleX(0.8860);transform-origin:right center">1,000.00</div>
<div class="t" style="right:514.5px;top:213px;font-size:8.7px;line-height:11px;color:#3a3a3a;-webkit-text-stroke:0.22px #3a3a3a;letter-spacing:0.3px;transform:scaleX(0.8877);transform-origin:right center">0.00</div>
<div class="t" style="left:705.5px;top:213px;font-size:8.7px;line-height:11px;color:#3a3a3a;-webkit-text-stroke:0.22px #3a3a3a;letter-spacing:0.3px;transform:scaleX(0.8883);transform-origin:left center">07-01-2021</div>
<div class="t" style="left:773.5px;top:213px;font-size:8.7px;line-height:11px;color:#3a3a3a;-webkit-text-stroke:0.22px #3a3a3a;letter-spacing:0.3px;transform:scaleX(0.8883);transform-origin:left center">07-31-2021</div>
<div class="t" style="left:837px;width:54px;text-align:center;top:213px;font-size:8.7px;line-height:11px;color:#3a3a3a;-webkit-text-stroke:0.22px #3a3a3a;letter-spacing:0.3px;transform:scaleX(0.8997);transform-origin:center center">0</div>
<div class="t" style="left:894.5px;top:213px;font-size:8.7px;line-height:11px;color:#3a3a3a;-webkit-text-stroke:0.22px #3a3a3a;letter-spacing:0.3px;transform:scaleX(0.9445);transform-origin:left center">Credit</div>
<div class="abs" style="left:1047px;top:214px;line-height:0"><svg width="7" height="8" viewBox="0 0 7 8"><path d="M1.6 3.4V2.4A1.9 1.9 0 0 1 5.4 2.4V3.4" fill="none" stroke="#e8b634" stroke-width="1.1"/><rect x="0.6" y="3.4" width="5.8" height="4.4" rx="0.5" fill="#e8b634"/></svg></div>
<div class="t" style="left:1077.5px;top:213px;font-size:8.7px;line-height:11px;color:#3a3a3a;-webkit-text-stroke:0.22px #3a3a3a;letter-spacing:0.3px;transform:scaleX(0.8883);transform-origin:left center">07-01-2021</div>
<div class="t" style="left:1137.5px;top:213px;font-size:8.7px;line-height:11px;color:#3a3a3a;-webkit-text-stroke:0.22px #3a3a3a;letter-spacing:0.3px;transform:scaleX(0.9499);transform-origin:left center">Super Admin</div>
<div class="abs" style="left:0;top:230px;width:1213px;height:23px;background:#f9f9f9"></div>
<div class="abs" style="left:33px;top:230px;width:1px;height:23px;background:#ececec"></div>
<div class="abs" style="left:66px;top:230px;width:1px;height:23px;background:#ececec"></div>
<div class="abs" style="left:94px;top:230px;width:1px;height:23px;background:#ececec"></div>
<div class="abs" style="left:172px;top:230px;width:1px;height:23px;background:#ececec"></div>
<div class="abs" style="left:265px;top:230px;width:1px;height:23px;background:#ececec"></div>
<div class="abs" style="left:363px;top:230px;width:1px;height:23px;background:#ececec"></div>
<div class="abs" style="left:444px;top:230px;width:1px;height:23px;background:#ececec"></div>
<div class="abs" style="left:511px;top:230px;width:1px;height:23px;background:#ececec"></div>
<div class="abs" style="left:581px;top:230px;width:1px;height:23px;background:#ececec"></div>
<div class="abs" style="left:649px;top:230px;width:1px;height:23px;background:#ececec"></div>
<div class="abs" style="left:702px;top:230px;width:1px;height:23px;background:#ececec"></div>
<div class="abs" style="left:770px;top:230px;width:1px;height:23px;background:#ececec"></div>
<div class="abs" style="left:837px;top:230px;width:1px;height:23px;background:#ececec"></div>
<div class="abs" style="left:891px;top:230px;width:1px;height:23px;background:#ececec"></div>
<div class="abs" style="left:939px;top:230px;width:1px;height:23px;background:#ececec"></div>
<div class="abs" style="left:1027px;top:230px;width:1px;height:23px;background:#ececec"></div>
<div class="abs" style="left:1074px;top:230px;width:1px;height:23px;background:#ececec"></div>
<div class="abs" style="left:1134px;top:230px;width:1px;height:23px;background:#ececec"></div>
<div class="abs" style="left:1201px;top:230px;width:1px;height:23px;background:#ececec"></div>
<span class="cb" style="left:11px;top:236px"></span>
<span class="cb" style="left:45px;top:236px"></span>
<span class="abs" style="left:76px;top:239px;width:9px;height:9px;border-radius:50%;border:1px dashed #ebebeb"></span>
<div class="t" style="left:97.5px;top:236px;font-size:8.7px;line-height:11px;color:#4a86cf;font-weight:bold;letter-spacing:0.2px;transform:scaleX(0.8933);transform-origin:left center">SMS-21040003</div>
<div class="t" style="left:268.5px;top:236px;font-size:8.7px;line-height:11px;color:#3a3a3a;-webkit-text-stroke:0.22px #3a3a3a;letter-spacing:0.3px;transform:scaleX(0.8891);transform-origin:left center">3M COMPANY</div>
<div class="t" style="left:366.5px;top:236px;font-size:8.7px;line-height:11px;color:#4a86cf;font-weight:bold;letter-spacing:0.2px;transform:scaleX(0.9480);transform-origin:left center">IN-31103</div>
<div class="t" style="left:444px;width:67px;text-align:center;top:236px;font-size:8.7px;line-height:11px;color:#3a3a3a;-webkit-text-stroke:0.22px #3a3a3a;letter-spacing:0.3px;transform:scaleX(0.8524);transform-origin:center center">LAX</div>
<div class="t" style="right:635.5px;top:236px;font-size:8.7px;line-height:11px;color:#3a3a3a;-webkit-text-stroke:0.22px #3a3a3a;letter-spacing:0.3px;transform:scaleX(0.8860);transform-origin:right center">1,000.00</div>
<div class="t" style="right:567.5px;top:236px;font-size:8.7px;line-height:11px;color:#3a3a3a;-webkit-text-stroke:0.22px #3a3a3a;letter-spacing:0.3px;transform:scaleX(0.8860);transform-origin:right center">1,000.00</div>
<div class="t" style="right:514.5px;top:236px;font-size:8.7px;line-height:11px;color:#3a3a3a;-webkit-text-stroke:0.22px #3a3a3a;letter-spacing:0.3px;transform:scaleX(0.8877);transform-origin:right center">0.00</div>
<div class="t" style="left:705.5px;top:236px;font-size:8.7px;line-height:11px;color:#3a3a3a;-webkit-text-stroke:0.22px #3a3a3a;letter-spacing:0.3px;transform:scaleX(0.8883);transform-origin:left center">07-01-2021</div>
<div class="t" style="left:773.5px;top:236px;font-size:8.7px;line-height:11px;color:#3a3a3a;-webkit-text-stroke:0.22px #3a3a3a;letter-spacing:0.3px;transform:scaleX(0.8883);transform-origin:left center">07-31-2021</div>
<div class="t" style="left:837px;width:54px;text-align:center;top:236px;font-size:8.7px;line-height:11px;color:#3a3a3a;-webkit-text-stroke:0.22px #3a3a3a;letter-spacing:0.3px;transform:scaleX(0.8997);transform-origin:center center">0</div>
<div class="t" style="left:894.5px;top:236px;font-size:8.7px;line-height:11px;color:#3a3a3a;-webkit-text-stroke:0.22px #3a3a3a;letter-spacing:0.3px;transform:scaleX(0.8890);transform-origin:left center">A/R</div>
<div class="abs" style="left:1047px;top:237px;line-height:0"><svg width="7" height="8" viewBox="0 0 7 8"><path d="M1.6 3.4V2.4A1.9 1.9 0 0 1 5.4 2.4V3.4" fill="none" stroke="#e8b634" stroke-width="1.1"/><rect x="0.6" y="3.4" width="5.8" height="4.4" rx="0.5" fill="#e8b634"/></svg></div>
<div class="t" style="left:1077.5px;top:236px;font-size:8.7px;line-height:11px;color:#3a3a3a;-webkit-text-stroke:0.22px #3a3a3a;letter-spacing:0.3px;transform:scaleX(0.8883);transform-origin:left center">07-01-2021</div>
<div class="t" style="left:1137.5px;top:236px;font-size:8.7px;line-height:11px;color:#3a3a3a;-webkit-text-stroke:0.22px #3a3a3a;letter-spacing:0.3px;transform:scaleX(0.9499);transform-origin:left center">Super Admin</div>
<div class="abs" style="left:0;top:253px;width:1213px;height:23px;background:#ffffff"></div>
<div class="abs" style="left:33px;top:253px;width:1px;height:23px;background:#ececec"></div>
<div class="abs" style="left:66px;top:253px;width:1px;height:23px;background:#ececec"></div>
<div class="abs" style="left:94px;top:253px;width:1px;height:23px;background:#ececec"></div>
<div class="abs" style="left:172px;top:253px;width:1px;height:23px;background:#ececec"></div>
<div class="abs" style="left:265px;top:253px;width:1px;height:23px;background:#ececec"></div>
<div class="abs" style="left:363px;top:253px;width:1px;height:23px;background:#ececec"></div>
<div class="abs" style="left:444px;top:253px;width:1px;height:23px;background:#ececec"></div>
<div class="abs" style="left:511px;top:253px;width:1px;height:23px;background:#ececec"></div>
<div class="abs" style="left:581px;top:253px;width:1px;height:23px;background:#ececec"></div>
<div class="abs" style="left:649px;top:253px;width:1px;height:23px;background:#ececec"></div>
<div class="abs" style="left:702px;top:253px;width:1px;height:23px;background:#ececec"></div>
<div class="abs" style="left:770px;top:253px;width:1px;height:23px;background:#ececec"></div>
<div class="abs" style="left:837px;top:253px;width:1px;height:23px;background:#ececec"></div>
<div class="abs" style="left:891px;top:253px;width:1px;height:23px;background:#ececec"></div>
<div class="abs" style="left:939px;top:253px;width:1px;height:23px;background:#ececec"></div>
<div class="abs" style="left:1027px;top:253px;width:1px;height:23px;background:#ececec"></div>
<div class="abs" style="left:1074px;top:253px;width:1px;height:23px;background:#ececec"></div>
<div class="abs" style="left:1134px;top:253px;width:1px;height:23px;background:#ececec"></div>
<div class="abs" style="left:1201px;top:253px;width:1px;height:23px;background:#ececec"></div>
<span class="cb" style="left:11px;top:259px"></span>
<span class="cb dis" style="left:45px;top:259px"></span>
<span class="abs" style="left:76px;top:262px;width:9px;height:9px;border-radius:50%;border:1px dashed #ebebeb"></span>
<div class="t" style="left:97.5px;top:259px;font-size:8.7px;line-height:11px;color:#4a86cf;font-weight:bold;letter-spacing:0.2px;transform:scaleX(0.8974);transform-origin:left center">OEX-21050018</div>
<div class="t" style="left:268.5px;top:259px;font-size:8.7px;line-height:11px;color:#3a3a3a;-webkit-text-stroke:0.22px #3a3a3a;letter-spacing:0.3px;transform:scaleX(0.8713);transform-origin:left center">ADAMS AND SONS</div>
<div class="t" style="left:366.5px;top:259px;font-size:8.7px;line-height:11px;color:#4a86cf;font-weight:bold;letter-spacing:0.2px;transform:scaleX(0.8939);transform-origin:left center">DC-19369</div>
<div class="t" style="left:444px;width:67px;text-align:center;top:259px;font-size:8.7px;line-height:11px;color:#3a3a3a;-webkit-text-stroke:0.22px #3a3a3a;letter-spacing:0.3px;transform:scaleX(0.8524);transform-origin:center center">LAX</div>
<div class="t" style="right:635.5px;top:259px;font-size:8.7px;line-height:11px;color:#3a3a3a;-webkit-text-stroke:0.22px #3a3a3a;letter-spacing:0.3px;transform:scaleX(0.8860);transform-origin:right center">8,000.00</div>
<div class="t" style="right:567.5px;top:259px;font-size:8.7px;line-height:11px;color:#3a3a3a;-webkit-text-stroke:0.22px #3a3a3a;letter-spacing:0.3px;transform:scaleX(0.8877);transform-origin:right center">0.00</div>
<div class="t" style="right:514.5px;top:259px;font-size:8.7px;line-height:11px;color:#3a3a3a;-webkit-text-stroke:0.22px #3a3a3a;letter-spacing:0.3px;transform:scaleX(0.8860);transform-origin:right center">8,000.00</div>
<div class="t" style="left:705.5px;top:259px;font-size:8.7px;line-height:11px;color:#3a3a3a;-webkit-text-stroke:0.22px #3a3a3a;letter-spacing:0.3px;transform:scaleX(0.8883);transform-origin:left center">06-30-2021</div>
<div class="t" style="left:773.5px;top:259px;font-size:8.7px;line-height:11px;color:#3a3a3a;-webkit-text-stroke:0.22px #3a3a3a;letter-spacing:0.3px;transform:scaleX(0.8883);transform-origin:left center">07-30-2021</div>
<div class="t" style="left:837px;width:54px;text-align:center;top:259px;font-size:8.7px;line-height:11px;color:#3a3a3a;-webkit-text-stroke:0.22px #3a3a3a;letter-spacing:0.3px;transform:scaleX(0.8997);transform-origin:center center">0</div>
<div class="t" style="left:894.5px;top:259px;font-size:8.7px;line-height:11px;color:#3a3a3a;-webkit-text-stroke:0.22px #3a3a3a;letter-spacing:0.3px;transform:scaleX(0.9675);transform-origin:left center">Debit</div>
<div class="t" style="left:942.5px;top:259px;font-size:8.7px;line-height:11px;color:#3a3a3a;-webkit-text-stroke:0.22px #3a3a3a;letter-spacing:0.3px;transform:scaleX(0.8770);transform-origin:left center">PMC-123</div>
<div class="abs" style="left:1039px;top:259px;width:24px;height:11px;background:#c8c8c8"></div>
<div class="t" style="left:1039px;top:259px;width:24px;text-align:center;font-size:7.4px;line-height:11px;color:#fff">Draft</div>
<div class="t" style="left:1077.5px;top:259px;font-size:8.7px;line-height:11px;color:#3a3a3a;-webkit-text-stroke:0.22px #3a3a3a;letter-spacing:0.3px;transform:scaleX(0.8883);transform-origin:left center">06-30-2021</div>
<div class="t" style="left:1137.5px;top:259px;font-size:8.7px;line-height:11px;color:#3a3a3a;-webkit-text-stroke:0.22px #3a3a3a;letter-spacing:0.3px;transform:scaleX(0.9287);transform-origin:left center">Deb</div>
<div class="abs" style="left:0;top:276px;width:1213px;height:23px;background:#f9f9f9"></div>
<div class="abs" style="left:33px;top:276px;width:1px;height:23px;background:#ececec"></div>
<div class="abs" style="left:66px;top:276px;width:1px;height:23px;background:#ececec"></div>
<div class="abs" style="left:94px;top:276px;width:1px;height:23px;background:#ececec"></div>
<div class="abs" style="left:172px;top:276px;width:1px;height:23px;background:#ececec"></div>
<div class="abs" style="left:265px;top:276px;width:1px;height:23px;background:#ececec"></div>
<div class="abs" style="left:363px;top:276px;width:1px;height:23px;background:#ececec"></div>
<div class="abs" style="left:444px;top:276px;width:1px;height:23px;background:#ececec"></div>
<div class="abs" style="left:511px;top:276px;width:1px;height:23px;background:#ececec"></div>
<div class="abs" style="left:581px;top:276px;width:1px;height:23px;background:#ececec"></div>
<div class="abs" style="left:649px;top:276px;width:1px;height:23px;background:#ececec"></div>
<div class="abs" style="left:702px;top:276px;width:1px;height:23px;background:#ececec"></div>
<div class="abs" style="left:770px;top:276px;width:1px;height:23px;background:#ececec"></div>
<div class="abs" style="left:837px;top:276px;width:1px;height:23px;background:#ececec"></div>
<div class="abs" style="left:891px;top:276px;width:1px;height:23px;background:#ececec"></div>
<div class="abs" style="left:939px;top:276px;width:1px;height:23px;background:#ececec"></div>
<div class="abs" style="left:1027px;top:276px;width:1px;height:23px;background:#ececec"></div>
<div class="abs" style="left:1074px;top:276px;width:1px;height:23px;background:#ececec"></div>
<div class="abs" style="left:1134px;top:276px;width:1px;height:23px;background:#ececec"></div>
<div class="abs" style="left:1201px;top:276px;width:1px;height:23px;background:#ececec"></div>
<span class="cb" style="left:11px;top:282px"></span>
<span class="cb" style="left:45px;top:282px"></span>
<span class="abs" style="left:76px;top:285px;width:9px;height:9px;border-radius:50%;border:1px dashed #ebebeb"></span>
<div class="t" style="left:97.5px;top:282px;font-size:8.7px;line-height:11px;color:#4a86cf;font-weight:bold;letter-spacing:0.2px;transform:scaleX(0.9015);transform-origin:left center">SOI-21050003</div>
<div class="t" style="left:175.5px;top:282px;font-size:8.7px;line-height:11px;color:#3a3a3a;-webkit-text-stroke:0.22px #3a3a3a;letter-spacing:0.3px;transform:scaleX(0.8997);transform-origin:left center">125666</div>
<div class="t" style="left:268.5px;top:282px;font-size:8.7px;line-height:11px;color:#3a3a3a;-webkit-text-stroke:0.22px #3a3a3a;letter-spacing:0.3px;transform:scaleX(0.8891);transform-origin:left center">3M COMPANY</div>
<div class="t" style="left:366.5px;top:282px;font-size:8.7px;line-height:11px;color:#4a86cf;font-weight:bold;letter-spacing:0.2px;transform:scaleX(0.9311);transform-origin:left center">IN-31140-(1)</div>
<div class="t" style="left:444px;width:67px;text-align:center;top:282px;font-size:8.7px;line-height:11px;color:#3a3a3a;-webkit-text-stroke:0.22px #3a3a3a;letter-spacing:0.3px;transform:scaleX(0.8524);transform-origin:center center">LAX</div>
<div class="t" style="right:635.5px;top:282px;font-size:8.7px;line-height:11px;color:#3a3a3a;-webkit-text-stroke:0.22px #3a3a3a;letter-spacing:0.3px;transform:scaleX(0.8920);transform-origin:right center">150.00</div>
<div class="t" style="right:567.5px;top:282px;font-size:8.7px;line-height:11px;color:#3a3a3a;-webkit-text-stroke:0.22px #3a3a3a;letter-spacing:0.3px;transform:scaleX(0.8920);transform-origin:right center">150.00</div>
<div class="t" style="right:514.5px;top:282px;font-size:8.7px;line-height:11px;color:#3a3a3a;-webkit-text-stroke:0.22px #3a3a3a;letter-spacing:0.3px;transform:scaleX(0.8877);transform-origin:right center">0.00</div>
<div class="t" style="left:705.5px;top:282px;font-size:8.7px;line-height:11px;color:#3a3a3a;-webkit-text-stroke:0.22px #3a3a3a;letter-spacing:0.3px;transform:scaleX(0.8883);transform-origin:left center">06-30-2021</div>
<div class="t" style="left:773.5px;top:282px;font-size:8.7px;line-height:11px;color:#3a3a3a;-webkit-text-stroke:0.22px #3a3a3a;letter-spacing:0.3px;transform:scaleX(0.8883);transform-origin:left center">07-30-2021</div>
<div class="t" style="left:837px;width:54px;text-align:center;top:282px;font-size:8.7px;line-height:11px;color:#3a3a3a;-webkit-text-stroke:0.22px #3a3a3a;letter-spacing:0.3px;transform:scaleX(0.8997);transform-origin:center center">0</div>
<div class="t" style="left:894.5px;top:282px;font-size:8.7px;line-height:11px;color:#3a3a3a;-webkit-text-stroke:0.22px #3a3a3a;letter-spacing:0.3px;transform:scaleX(0.8890);transform-origin:left center">A/R</div>
<div class="t" style="left:942.5px;top:282px;font-size:8.7px;line-height:11px;color:#3a3a3a;-webkit-text-stroke:0.22px #3a3a3a;letter-spacing:0.3px;transform:scaleX(0.8997);transform-origin:left center">21050007</div>
<div class="abs" style="left:1047px;top:283px;line-height:0"><svg width="7" height="8" viewBox="0 0 7 8"><path d="M1.6 3.4V2.4A1.9 1.9 0 0 1 5.4 2.4V3.4" fill="none" stroke="#e8b634" stroke-width="1.1"/><rect x="0.6" y="3.4" width="5.8" height="4.4" rx="0.5" fill="#e8b634"/></svg></div>
<div class="t" style="left:1077.5px;top:282px;font-size:8.7px;line-height:11px;color:#3a3a3a;-webkit-text-stroke:0.22px #3a3a3a;letter-spacing:0.3px;transform:scaleX(0.8883);transform-origin:left center">06-30-2021</div>
<div class="t" style="left:1137.5px;top:282px;font-size:8.7px;line-height:11px;color:#3a3a3a;-webkit-text-stroke:0.22px #3a3a3a;letter-spacing:0.3px;transform:scaleX(0.9304);transform-origin:left center">Sherina</div>
<div class="abs" style="left:0;top:299px;width:1213px;height:23px;background:#ffffff"></div>
<div class="abs" style="left:33px;top:299px;width:34px;height:23px;background:#f2c935"></div>
<div class="abs" style="left:94px;top:299px;width:1px;height:23px;background:#ececec"></div>
<div class="abs" style="left:172px;top:299px;width:1px;height:23px;background:#ececec"></div>
<div class="abs" style="left:265px;top:299px;width:1px;height:23px;background:#ececec"></div>
<div class="abs" style="left:363px;top:299px;width:1px;height:23px;background:#ececec"></div>
<div class="abs" style="left:444px;top:299px;width:1px;height:23px;background:#ececec"></div>
<div class="abs" style="left:511px;top:299px;width:1px;height:23px;background:#ececec"></div>
<div class="abs" style="left:581px;top:299px;width:1px;height:23px;background:#ececec"></div>
<div class="abs" style="left:649px;top:299px;width:1px;height:23px;background:#ececec"></div>
<div class="abs" style="left:702px;top:299px;width:1px;height:23px;background:#ececec"></div>
<div class="abs" style="left:770px;top:299px;width:1px;height:23px;background:#ececec"></div>
<div class="abs" style="left:837px;top:299px;width:1px;height:23px;background:#ececec"></div>
<div class="abs" style="left:891px;top:299px;width:1px;height:23px;background:#ececec"></div>
<div class="abs" style="left:939px;top:299px;width:1px;height:23px;background:#ececec"></div>
<div class="abs" style="left:1027px;top:299px;width:1px;height:23px;background:#ececec"></div>
<div class="abs" style="left:1074px;top:299px;width:1px;height:23px;background:#ececec"></div>
<div class="abs" style="left:1134px;top:299px;width:1px;height:23px;background:#ececec"></div>
<div class="abs" style="left:1201px;top:299px;width:1px;height:23px;background:#ececec"></div>
<span class="cb" style="left:11px;top:305px"></span>
<span class="cb" style="left:45px;top:305px"><svg width="11" height="11" viewBox="0 0 11 11" style="position:absolute;left:-1px;top:-1px"><path d="M3 5.7L4.7 7.4L8.3 3.4" fill="none" stroke="#505050" stroke-width="1.15"/></svg></span>
<span class="abs" style="left:76px;top:308px;width:9px;height:9px;border-radius:50%;border:1px dashed #ebebeb"></span>
<div class="t" style="left:97.5px;top:305px;font-size:8.7px;line-height:11px;color:#4a86cf;font-weight:bold;letter-spacing:0.2px;transform:scaleX(0.9015);transform-origin:left center">SOI-21050003</div>
<div class="t" style="left:175.5px;top:305px;font-size:8.7px;line-height:11px;color:#3a3a3a;-webkit-text-stroke:0.22px #3a3a3a;letter-spacing:0.3px;transform:scaleX(0.8997);transform-origin:left center">125666</div>
<div class="t" style="left:268.5px;top:305px;font-size:8.7px;line-height:11px;color:#3a3a3a;-webkit-text-stroke:0.22px #3a3a3a;letter-spacing:0.3px;transform:scaleX(0.8360);transform-origin:left center">CABRERA TRUCKING ...</div>
<div class="t" style="left:366.5px;top:305px;font-size:8.7px;line-height:11px;color:#4a86cf;font-weight:bold;letter-spacing:0.2px;transform:scaleX(0.9171);transform-origin:left center">NP-00084</div>
<div class="t" style="left:444px;width:67px;text-align:center;top:305px;font-size:8.7px;line-height:11px;color:#3a3a3a;-webkit-text-stroke:0.22px #3a3a3a;letter-spacing:0.3px;transform:scaleX(0.8524);transform-origin:center center">LAX</div>
<div class="t" style="right:635.5px;top:305px;font-size:8.7px;line-height:11px;color:#3a3a3a;-webkit-text-stroke:0.22px #3a3a3a;letter-spacing:0.3px;transform:scaleX(0.8920);transform-origin:right center">350.00</div>
<div class="t" style="right:567.5px;top:305px;font-size:8.7px;line-height:11px;color:#3a3a3a;-webkit-text-stroke:0.22px #3a3a3a;letter-spacing:0.3px;transform:scaleX(0.8877);transform-origin:right center">0.00</div>
<div class="t" style="right:514.5px;top:305px;font-size:8.7px;line-height:11px;color:#3a3a3a;-webkit-text-stroke:0.22px #3a3a3a;letter-spacing:0.3px;transform:scaleX(0.8920);transform-origin:right center">350.00</div>
<div class="t" style="left:705.5px;top:305px;font-size:8.7px;line-height:11px;color:#3a3a3a;-webkit-text-stroke:0.22px #3a3a3a;letter-spacing:0.3px;transform:scaleX(0.8883);transform-origin:left center">06-30-2021</div>
<div class="t" style="left:773.5px;top:305px;font-size:8.7px;line-height:11px;color:#3a3a3a;-webkit-text-stroke:0.22px #3a3a3a;letter-spacing:0.3px;transform:scaleX(0.8883);transform-origin:left center">07-30-2021</div>
<div class="t" style="left:837px;width:54px;text-align:center;top:305px;font-size:8.7px;line-height:11px;color:#3a3a3a;-webkit-text-stroke:0.22px #3a3a3a;letter-spacing:0.3px;transform:scaleX(0.8997);transform-origin:center center">0</div>
<div class="t" style="left:894.5px;top:305px;font-size:8.7px;line-height:11px;color:#3a3a3a;-webkit-text-stroke:0.22px #3a3a3a;letter-spacing:0.3px;transform:scaleX(0.9046);transform-origin:left center">A/P</div>
<div class="t" style="left:942.5px;top:305px;font-size:8.7px;line-height:11px;color:#3a3a3a;-webkit-text-stroke:0.22px #3a3a3a;letter-spacing:0.3px;transform:scaleX(0.8997);transform-origin:left center">21050007</div>
<div class="t" style="left:1077.5px;top:305px;font-size:8.7px;line-height:11px;color:#3a3a3a;-webkit-text-stroke:0.22px #3a3a3a;letter-spacing:0.3px;transform:scaleX(0.8883);transform-origin:left center">06-30-2021</div>
<div class="t" style="left:1137.5px;top:305px;font-size:8.7px;line-height:11px;color:#3a3a3a;-webkit-text-stroke:0.22px #3a3a3a;letter-spacing:0.3px;transform:scaleX(0.9275);transform-origin:left center">Scott</div>
<div class="abs" style="left:0;top:322px;width:1213px;height:23px;background:#f9f9f9"></div>
<div class="abs" style="left:33px;top:322px;width:1px;height:23px;background:#ececec"></div>
<div class="abs" style="left:66px;top:322px;width:1px;height:23px;background:#ececec"></div>
<div class="abs" style="left:94px;top:322px;width:1px;height:23px;background:#ececec"></div>
<div class="abs" style="left:172px;top:322px;width:1px;height:23px;background:#ececec"></div>
<div class="abs" style="left:265px;top:322px;width:1px;height:23px;background:#ececec"></div>
<div class="abs" style="left:363px;top:322px;width:1px;height:23px;background:#ececec"></div>
<div class="abs" style="left:444px;top:322px;width:1px;height:23px;background:#ececec"></div>
<div class="abs" style="left:511px;top:322px;width:1px;height:23px;background:#ececec"></div>
<div class="abs" style="left:581px;top:322px;width:1px;height:23px;background:#ececec"></div>
<div class="abs" style="left:649px;top:322px;width:1px;height:23px;background:#ececec"></div>
<div class="abs" style="left:702px;top:322px;width:1px;height:23px;background:#ececec"></div>
<div class="abs" style="left:770px;top:322px;width:1px;height:23px;background:#ececec"></div>
<div class="abs" style="left:837px;top:322px;width:1px;height:23px;background:#ececec"></div>
<div class="abs" style="left:891px;top:322px;width:1px;height:23px;background:#ececec"></div>
<div class="abs" style="left:939px;top:322px;width:1px;height:23px;background:#ececec"></div>
<div class="abs" style="left:1027px;top:322px;width:1px;height:23px;background:#ececec"></div>
<div class="abs" style="left:1074px;top:322px;width:1px;height:23px;background:#ececec"></div>
<div class="abs" style="left:1134px;top:322px;width:1px;height:23px;background:#ececec"></div>
<div class="abs" style="left:1201px;top:322px;width:1px;height:23px;background:#ececec"></div>
<span class="cb" style="left:11px;top:328px"></span>
<span class="cb" style="left:45px;top:328px"></span>
<span class="abs" style="left:76px;top:331px;width:9px;height:9px;border-radius:50%;border:1px dashed #ebebeb"></span>
<div class="t" style="left:97.5px;top:328px;font-size:8.7px;line-height:11px;color:#4a86cf;font-weight:bold;letter-spacing:0.2px;transform:scaleX(0.9015);transform-origin:left center">SOI-21050003</div>
<div class="t" style="left:175.5px;top:328px;font-size:8.7px;line-height:11px;color:#3a3a3a;-webkit-text-stroke:0.22px #3a3a3a;letter-spacing:0.3px;transform:scaleX(0.8997);transform-origin:left center">125666</div>
<div class="t" style="left:268.5px;top:328px;font-size:8.7px;line-height:11px;color:#3a3a3a;-webkit-text-stroke:0.22px #3a3a3a;letter-spacing:0.3px;transform:scaleX(0.8891);transform-origin:left center">3M COMPANY</div>
<div class="t" style="left:366.5px;top:328px;font-size:8.7px;line-height:11px;color:#4a86cf;font-weight:bold;letter-spacing:0.2px;transform:scaleX(0.9480);transform-origin:left center">IN-31140</div>
<div class="t" style="left:444px;width:67px;text-align:center;top:328px;font-size:8.7px;line-height:11px;color:#3a3a3a;-webkit-text-stroke:0.22px #3a3a3a;letter-spacing:0.3px;transform:scaleX(0.8524);transform-origin:center center">LAX</div>
<div class="t" style="right:635.5px;top:328px;font-size:8.7px;line-height:11px;color:#3a3a3a;-webkit-text-stroke:0.22px #3a3a3a;letter-spacing:0.3px;transform:scaleX(0.8920);transform-origin:right center">850.00</div>
<div class="t" style="right:567.5px;top:328px;font-size:8.7px;line-height:11px;color:#3a3a3a;-webkit-text-stroke:0.22px #3a3a3a;letter-spacing:0.3px;transform:scaleX(0.8920);transform-origin:right center">850.00</div>
<div class="t" style="right:514.5px;top:328px;font-size:8.7px;line-height:11px;color:#3a3a3a;-webkit-text-stroke:0.22px #3a3a3a;letter-spacing:0.3px;transform:scaleX(0.8877);transform-origin:right center">0.00</div>
<div class="t" style="left:705.5px;top:328px;font-size:8.7px;line-height:11px;color:#3a3a3a;-webkit-text-stroke:0.22px #3a3a3a;letter-spacing:0.3px;transform:scaleX(0.8883);transform-origin:left center">06-30-2021</div>
<div class="t" style="left:773.5px;top:328px;font-size:8.7px;line-height:11px;color:#3a3a3a;-webkit-text-stroke:0.22px #3a3a3a;letter-spacing:0.3px;transform:scaleX(0.8883);transform-origin:left center">07-30-2021</div>
<div class="t" style="left:837px;width:54px;text-align:center;top:328px;font-size:8.7px;line-height:11px;color:#3a3a3a;-webkit-text-stroke:0.22px #3a3a3a;letter-spacing:0.3px;transform:scaleX(0.8997);transform-origin:center center">0</div>
<div class="t" style="left:894.5px;top:328px;font-size:8.7px;line-height:11px;color:#3a3a3a;-webkit-text-stroke:0.22px #3a3a3a;letter-spacing:0.3px;transform:scaleX(0.8890);transform-origin:left center">A/R</div>
<div class="t" style="left:942.5px;top:328px;font-size:8.7px;line-height:11px;color:#3a3a3a;-webkit-text-stroke:0.22px #3a3a3a;letter-spacing:0.3px;transform:scaleX(0.8997);transform-origin:left center">21050007</div>
<div class="abs" style="left:1047px;top:329px;line-height:0"><svg width="7" height="8" viewBox="0 0 7 8"><path d="M1.6 3.4V2.4A1.9 1.9 0 0 1 5.4 2.4V3.4" fill="none" stroke="#e8b634" stroke-width="1.1"/><rect x="0.6" y="3.4" width="5.8" height="4.4" rx="0.5" fill="#e8b634"/></svg></div>
<div class="t" style="left:1077.5px;top:328px;font-size:8.7px;line-height:11px;color:#3a3a3a;-webkit-text-stroke:0.22px #3a3a3a;letter-spacing:0.3px;transform:scaleX(0.8883);transform-origin:left center">06-30-2021</div>
<div class="t" style="left:1137.5px;top:328px;font-size:8.7px;line-height:11px;color:#3a3a3a;-webkit-text-stroke:0.22px #3a3a3a;letter-spacing:0.3px;transform:scaleX(0.9275);transform-origin:left center">Scott</div>
<div class="abs" style="left:0;top:345px;width:1213px;height:23px;background:#ffffff"></div>
<div class="abs" style="left:33px;top:345px;width:1px;height:23px;background:#ececec"></div>
<div class="abs" style="left:66px;top:345px;width:1px;height:23px;background:#ececec"></div>
<div class="abs" style="left:94px;top:345px;width:1px;height:23px;background:#ececec"></div>
<div class="abs" style="left:172px;top:345px;width:1px;height:23px;background:#ececec"></div>
<div class="abs" style="left:265px;top:345px;width:1px;height:23px;background:#ececec"></div>
<div class="abs" style="left:363px;top:345px;width:1px;height:23px;background:#ececec"></div>
<div class="abs" style="left:444px;top:345px;width:1px;height:23px;background:#ececec"></div>
<div class="abs" style="left:511px;top:345px;width:1px;height:23px;background:#ececec"></div>
<div class="abs" style="left:581px;top:345px;width:1px;height:23px;background:#ececec"></div>
<div class="abs" style="left:649px;top:345px;width:1px;height:23px;background:#ececec"></div>
<div class="abs" style="left:702px;top:345px;width:1px;height:23px;background:#ececec"></div>
<div class="abs" style="left:770px;top:345px;width:1px;height:23px;background:#ececec"></div>
<div class="abs" style="left:837px;top:345px;width:1px;height:23px;background:#ececec"></div>
<div class="abs" style="left:891px;top:345px;width:1px;height:23px;background:#ececec"></div>
<div class="abs" style="left:939px;top:345px;width:1px;height:23px;background:#ececec"></div>
<div class="abs" style="left:1027px;top:345px;width:1px;height:23px;background:#ececec"></div>
<div class="abs" style="left:1074px;top:345px;width:1px;height:23px;background:#ececec"></div>
<div class="abs" style="left:1134px;top:345px;width:1px;height:23px;background:#ececec"></div>
<div class="abs" style="left:1201px;top:345px;width:1px;height:23px;background:#ececec"></div>
<span class="cb" style="left:11px;top:351px"></span>
<span class="cb" style="left:45px;top:351px"></span>
<span class="abs" style="left:76px;top:354px;width:9px;height:9px;border-radius:50%;border:1px dashed #ebebeb"></span>
<div class="t" style="left:97.5px;top:351px;font-size:8.7px;line-height:11px;color:#4a86cf;font-weight:bold;letter-spacing:0.2px;transform:scaleX(0.8753);transform-origin:left center">SAE-21050007</div>
<div class="t" style="left:175.5px;top:351px;font-size:8.7px;line-height:11px;color:#3a3a3a;-webkit-text-stroke:0.22px #3a3a3a;letter-spacing:0.3px;transform:scaleX(0.8952);transform-origin:left center">125-10000001</div>
<div class="t" style="left:268.5px;top:351px;font-size:8.7px;line-height:11px;color:#3a3a3a;-webkit-text-stroke:0.22px #3a3a3a;letter-spacing:0.3px;transform:scaleX(0.8416);transform-origin:left center">ABBOTT PLC</div>
<div class="t" style="left:366.5px;top:351px;font-size:8.7px;line-height:11px;color:#4a86cf;font-weight:bold;letter-spacing:0.2px;transform:scaleX(0.9091);transform-origin:left center">SIN-00168</div>
<div class="t" style="left:444px;width:67px;text-align:center;top:351px;font-size:8.7px;line-height:11px;color:#3a3a3a;-webkit-text-stroke:0.22px #3a3a3a;letter-spacing:0.3px;transform:scaleX(0.8619);transform-origin:center center">CHI</div>
<div class="t" style="right:635.5px;top:351px;font-size:8.7px;line-height:11px;color:#3a3a3a;-webkit-text-stroke:0.22px #3a3a3a;letter-spacing:0.3px;transform:scaleX(0.8920);transform-origin:right center">500.00</div>
<div class="t" style="right:567.5px;top:351px;font-size:8.7px;line-height:11px;color:#3a3a3a;-webkit-text-stroke:0.22px #3a3a3a;letter-spacing:0.3px;transform:scaleX(0.8877);transform-origin:right center">0.00</div>
<div class="t" style="right:514.5px;top:351px;font-size:8.7px;line-height:11px;color:#3a3a3a;-webkit-text-stroke:0.22px #3a3a3a;letter-spacing:0.3px;transform:scaleX(0.8920);transform-origin:right center">500.00</div>
<div class="t" style="left:705.5px;top:351px;font-size:8.7px;line-height:11px;color:#3a3a3a;-webkit-text-stroke:0.22px #3a3a3a;letter-spacing:0.3px;transform:scaleX(0.8883);transform-origin:left center">05-31-2021</div>
<div class="t" style="left:773.5px;top:351px;font-size:8.7px;line-height:11px;color:#3a3a3a;-webkit-text-stroke:0.22px #3a3a3a;letter-spacing:0.3px;transform:scaleX(0.8883);transform-origin:left center">06-30-2021</div>
<div class="t" style="left:837px;width:54px;text-align:center;top:351px;font-size:8.7px;line-height:11px;color:#3a3a3a;-webkit-text-stroke:0.22px #3a3a3a;letter-spacing:0.3px;transform:scaleX(0.8997);transform-origin:center center">0</div>
<div class="t" style="left:894.5px;top:351px;font-size:8.7px;line-height:11px;color:#3a3a3a;-webkit-text-stroke:0.22px #3a3a3a;letter-spacing:0.3px;transform:scaleX(0.8890);transform-origin:left center">A/R</div>
<div class="t" style="left:942.5px;top:351px;font-size:8.7px;line-height:11px;color:#3a3a3a;-webkit-text-stroke:0.22px #3a3a3a;letter-spacing:0.3px;transform:scaleX(0.8794);transform-origin:left center">SAH-21050007</div>
<div class="t" style="left:1077.5px;top:351px;font-size:8.7px;line-height:11px;color:#3a3a3a;-webkit-text-stroke:0.22px #3a3a3a;letter-spacing:0.3px;transform:scaleX(0.8883);transform-origin:left center">05-31-2021</div>
<div class="t" style="left:1137.5px;top:351px;font-size:8.7px;line-height:11px;color:#3a3a3a;-webkit-text-stroke:0.22px #3a3a3a;letter-spacing:0.3px;transform:scaleX(0.9499);transform-origin:left center">Super Admin</div>
<div class="abs" style="left:0;top:368px;width:1213px;height:23px;background:#f9f9f9"></div>
<div class="abs" style="left:33px;top:368px;width:1px;height:23px;background:#ececec"></div>
<div class="abs" style="left:66px;top:368px;width:1px;height:23px;background:#ececec"></div>
<div class="abs" style="left:94px;top:368px;width:1px;height:23px;background:#ececec"></div>
<div class="abs" style="left:172px;top:368px;width:1px;height:23px;background:#ececec"></div>
<div class="abs" style="left:265px;top:368px;width:1px;height:23px;background:#ececec"></div>
<div class="abs" style="left:363px;top:368px;width:1px;height:23px;background:#ececec"></div>
<div class="abs" style="left:444px;top:368px;width:1px;height:23px;background:#ececec"></div>
<div class="abs" style="left:511px;top:368px;width:1px;height:23px;background:#ececec"></div>
<div class="abs" style="left:581px;top:368px;width:1px;height:23px;background:#ececec"></div>
<div class="abs" style="left:649px;top:368px;width:1px;height:23px;background:#ececec"></div>
<div class="abs" style="left:702px;top:368px;width:1px;height:23px;background:#ececec"></div>
<div class="abs" style="left:770px;top:368px;width:1px;height:23px;background:#ececec"></div>
<div class="abs" style="left:837px;top:368px;width:1px;height:23px;background:#ececec"></div>
<div class="abs" style="left:891px;top:368px;width:1px;height:23px;background:#ececec"></div>
<div class="abs" style="left:939px;top:368px;width:1px;height:23px;background:#ececec"></div>
<div class="abs" style="left:1027px;top:368px;width:1px;height:23px;background:#ececec"></div>
<div class="abs" style="left:1074px;top:368px;width:1px;height:23px;background:#ececec"></div>
<div class="abs" style="left:1134px;top:368px;width:1px;height:23px;background:#ececec"></div>
<div class="abs" style="left:1201px;top:368px;width:1px;height:23px;background:#ececec"></div>
<span class="cb" style="left:11px;top:374px"></span>
<span class="cb" style="left:45px;top:374px"></span>
<span class="abs" style="left:76px;top:377px;width:9px;height:9px;border-radius:50%;border:1px dashed #ebebeb"></span>
<div class="t" style="left:97.5px;top:374px;font-size:8.7px;line-height:11px;color:#4a86cf;font-weight:bold;letter-spacing:0.2px;transform:scaleX(0.8753);transform-origin:left center">SAE-21050007</div>
<div class="t" style="left:175.5px;top:374px;font-size:8.7px;line-height:11px;color:#3a3a3a;-webkit-text-stroke:0.22px #3a3a3a;letter-spacing:0.3px;transform:scaleX(0.8952);transform-origin:left center">125-10000001</div>
<div class="t" style="left:268.5px;top:374px;font-size:8.7px;line-height:11px;color:#3a3a3a;-webkit-text-stroke:0.22px #3a3a3a;letter-spacing:0.3px;transform:scaleX(0.8891);transform-origin:left center">3M COMPANY</div>
<div class="t" style="left:366.5px;top:374px;font-size:8.7px;line-height:11px;color:#4a86cf;font-weight:bold;letter-spacing:0.2px;transform:scaleX(0.8748);transform-origin:left center">SDC-00080</div>
<div class="t" style="left:444px;width:67px;text-align:center;top:374px;font-size:8.7px;line-height:11px;color:#3a3a3a;-webkit-text-stroke:0.22px #3a3a3a;letter-spacing:0.3px;transform:scaleX(0.8619);transform-origin:center center">CHI</div>
<div class="t" style="right:635.5px;top:374px;font-size:8.7px;line-height:11px;color:#3a3a3a;-webkit-text-stroke:0.22px #3a3a3a;letter-spacing:0.3px;transform:scaleX(0.8904);transform-origin:right center">40.00</div>
<div class="t" style="right:567.5px;top:374px;font-size:8.7px;line-height:11px;color:#3a3a3a;-webkit-text-stroke:0.22px #3a3a3a;letter-spacing:0.3px;transform:scaleX(0.8877);transform-origin:right center">0.00</div>
<div class="t" style="right:514.5px;top:374px;font-size:8.7px;line-height:11px;color:#3a3a3a;-webkit-text-stroke:0.22px #3a3a3a;letter-spacing:0.3px;transform:scaleX(0.8904);transform-origin:right center">40.00</div>
<div class="t" style="left:705.5px;top:374px;font-size:8.7px;line-height:11px;color:#3a3a3a;-webkit-text-stroke:0.22px #3a3a3a;letter-spacing:0.3px;transform:scaleX(0.8883);transform-origin:left center">05-31-2021</div>
<div class="t" style="left:773.5px;top:374px;font-size:8.7px;line-height:11px;color:#3a3a3a;-webkit-text-stroke:0.22px #3a3a3a;letter-spacing:0.3px;transform:scaleX(0.8883);transform-origin:left center">06-30-2021</div>
<div class="t" style="left:837px;width:54px;text-align:center;top:374px;font-size:8.7px;line-height:11px;color:#3a3a3a;-webkit-text-stroke:0.22px #3a3a3a;letter-spacing:0.3px;transform:scaleX(0.8997);transform-origin:center center">0</div>
<div class="t" style="left:894.5px;top:374px;font-size:8.7px;line-height:11px;color:#3a3a3a;-webkit-text-stroke:0.22px #3a3a3a;letter-spacing:0.3px;transform:scaleX(0.9445);transform-origin:left center">Credit</div>
<div class="t" style="left:1077.5px;top:374px;font-size:8.7px;line-height:11px;color:#3a3a3a;-webkit-text-stroke:0.22px #3a3a3a;letter-spacing:0.3px;transform:scaleX(0.8883);transform-origin:left center">05-31-2021</div>
<div class="t" style="left:1137.5px;top:374px;font-size:8.7px;line-height:11px;color:#3a3a3a;-webkit-text-stroke:0.22px #3a3a3a;letter-spacing:0.3px;transform:scaleX(0.9499);transform-origin:left center">Super Admin</div>
<div class="abs" style="left:0;top:391px;width:1213px;height:23px;background:#ffffff"></div>
<div class="abs" style="left:33px;top:391px;width:1px;height:23px;background:#ececec"></div>
<div class="abs" style="left:66px;top:391px;width:1px;height:23px;background:#ececec"></div>
<div class="abs" style="left:94px;top:391px;width:1px;height:23px;background:#ececec"></div>
<div class="abs" style="left:172px;top:391px;width:1px;height:23px;background:#ececec"></div>
<div class="abs" style="left:265px;top:391px;width:1px;height:23px;background:#ececec"></div>
<div class="abs" style="left:363px;top:391px;width:1px;height:23px;background:#ececec"></div>
<div class="abs" style="left:444px;top:391px;width:1px;height:23px;background:#ececec"></div>
<div class="abs" style="left:511px;top:391px;width:1px;height:23px;background:#ececec"></div>
<div class="abs" style="left:581px;top:391px;width:1px;height:23px;background:#ececec"></div>
<div class="abs" style="left:649px;top:391px;width:1px;height:23px;background:#ececec"></div>
<div class="abs" style="left:702px;top:391px;width:1px;height:23px;background:#ececec"></div>
<div class="abs" style="left:770px;top:391px;width:1px;height:23px;background:#ececec"></div>
<div class="abs" style="left:837px;top:391px;width:1px;height:23px;background:#ececec"></div>
<div class="abs" style="left:891px;top:391px;width:1px;height:23px;background:#ececec"></div>
<div class="abs" style="left:939px;top:391px;width:1px;height:23px;background:#ececec"></div>
<div class="abs" style="left:1027px;top:391px;width:1px;height:23px;background:#ececec"></div>
<div class="abs" style="left:1074px;top:391px;width:1px;height:23px;background:#ececec"></div>
<div class="abs" style="left:1134px;top:391px;width:1px;height:23px;background:#ececec"></div>
<div class="abs" style="left:1201px;top:391px;width:1px;height:23px;background:#ececec"></div>
<span class="cb" style="left:11px;top:397px"></span>
<span class="cb" style="left:45px;top:397px"></span>
<span class="abs" style="left:76px;top:400px;width:9px;height:9px;border-radius:50%;border:1px dashed #ebebeb"></span>
<div class="t" style="left:97.5px;top:397px;font-size:8.7px;line-height:11px;color:#4a86cf;font-weight:bold;letter-spacing:0.2px;transform:scaleX(0.8753);transform-origin:left center">SAE-21050007</div>
<div class="t" style="left:175.5px;top:397px;font-size:8.7px;line-height:11px;color:#3a3a3a;-webkit-text-stroke:0.22px #3a3a3a;letter-spacing:0.3px;transform:scaleX(0.8952);transform-origin:left center">125-10000001</div>
<div class="t" style="left:268.5px;top:397px;font-size:8.7px;line-height:11px;color:#3a3a3a;-webkit-text-stroke:0.22px #3a3a3a;letter-spacing:0.3px;transform:scaleX(0.8444);transform-origin:left center">THE NEWARK GROUP</div>
<div class="t" style="left:366.5px;top:397px;font-size:8.7px;line-height:11px;color:#4a86cf;font-weight:bold;letter-spacing:0.2px;transform:scaleX(0.9171);transform-origin:left center">NP-00087</div>
<div class="t" style="left:444px;width:67px;text-align:center;top:397px;font-size:8.7px;line-height:11px;color:#3a3a3a;-webkit-text-stroke:0.22px #3a3a3a;letter-spacing:0.3px;transform:scaleX(0.8619);transform-origin:center center">CHI</div>
<div class="t" style="right:635.5px;top:397px;font-size:8.7px;line-height:11px;color:#3a3a3a;-webkit-text-stroke:0.22px #3a3a3a;letter-spacing:0.3px;transform:scaleX(0.8904);transform-origin:right center">50.00</div>
<div class="t" style="right:567.5px;top:397px;font-size:8.7px;line-height:11px;color:#3a3a3a;-webkit-text-stroke:0.22px #3a3a3a;letter-spacing:0.3px;transform:scaleX(0.8877);transform-origin:right center">0.00</div>
<div class="t" style="right:514.5px;top:397px;font-size:8.7px;line-height:11px;color:#3a3a3a;-webkit-text-stroke:0.22px #3a3a3a;letter-spacing:0.3px;transform:scaleX(0.8904);transform-origin:right center">50.00</div>
<div class="t" style="left:705.5px;top:397px;font-size:8.7px;line-height:11px;color:#3a3a3a;-webkit-text-stroke:0.22px #3a3a3a;letter-spacing:0.3px;transform:scaleX(0.8883);transform-origin:left center">05-31-2021</div>
<div class="t" style="left:773.5px;top:397px;font-size:8.7px;line-height:11px;color:#3a3a3a;-webkit-text-stroke:0.22px #3a3a3a;letter-spacing:0.3px;transform:scaleX(0.8883);transform-origin:left center">06-30-2021</div>
<div class="t" style="left:837px;width:54px;text-align:center;top:397px;font-size:8.7px;line-height:11px;color:#3a3a3a;-webkit-text-stroke:0.22px #3a3a3a;letter-spacing:0.3px;transform:scaleX(0.8997);transform-origin:center center">0</div>
<div class="t" style="left:894.5px;top:397px;font-size:8.7px;line-height:11px;color:#3a3a3a;-webkit-text-stroke:0.22px #3a3a3a;letter-spacing:0.3px;transform:scaleX(0.9046);transform-origin:left center">A/P</div>
<div class="t" style="left:1077.5px;top:397px;font-size:8.7px;line-height:11px;color:#3a3a3a;-webkit-text-stroke:0.22px #3a3a3a;letter-spacing:0.3px;transform:scaleX(0.8883);transform-origin:left center">05-31-2021</div>
<div class="t" style="left:1137.5px;top:397px;font-size:8.7px;line-height:11px;color:#3a3a3a;-webkit-text-stroke:0.22px #3a3a3a;letter-spacing:0.3px;transform:scaleX(0.9499);transform-origin:left center">Super Admin</div>
<div class="abs" style="left:1199px;top:0;width:14px;height:400px;background:#f1f1f1"></div>
<div class="abs" style="left:1200px;top:14px;width:11px;height:32px;background:#c1c1c1"></div>
<svg class="abs" style="left:1202px;top:4px" width="8" height="5" viewBox="0 0 8 5"><path d="M0.5 4.5L4 0.8L7.5 4.5Z" fill="#a3a3a3"/></svg>
<svg class="abs" style="left:1202px;top:392px" width="8" height="5" viewBox="0 0 8 5"><path d="M0.8 0.5L4 4L7.2 0.5Z" fill="#3a3a3a"/></svg>
</div>
<div class="abs" style="left:52px;top:268px;width:32px;height:22px;border:2px solid #fe0000"></div>
<div class="abs" style="left:52px;top:360px;width:32px;height:22px;border:2px solid #fe0000"></div>
</body></html>
